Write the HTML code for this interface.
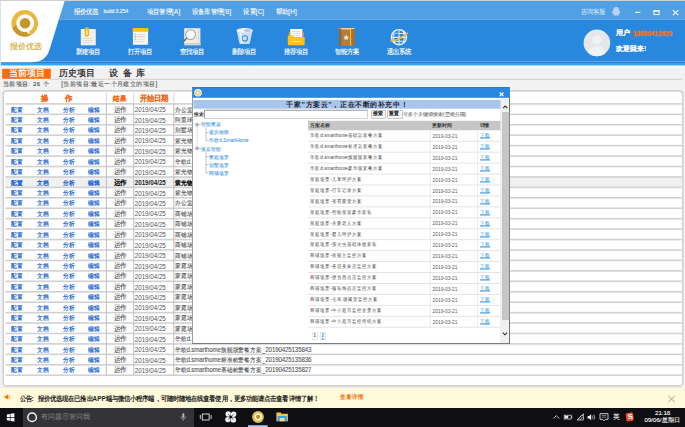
<!DOCTYPE html>
<html><head><meta charset="utf-8"><title>报价优选</title>
<style>
html,body{margin:0;padding:0;}
body{width:685px;height:427px;overflow:hidden;position:relative;background:#f2f2f2;font-family:"Liberation Sans",sans-serif;}
.t{position:absolute;white-space:nowrap;}
.r{position:absolute;}
svg{position:absolute;left:0;top:0;}
a{color:inherit;}
</style></head><body>

<svg width="685" height="68" viewBox="0 0 685 68">
<defs><linearGradient id="hg" x1="0" y1="0" x2="0" y2="1"><stop offset="0" stop-color="#2a9ff3"/><stop offset="0.75" stop-color="#3aacf7"/><stop offset="1" stop-color="#9fd4f8"/></linearGradient><linearGradient id="hg2" x1="0" y1="0" x2="0" y2="1"><stop offset="0" stop-color="#fcfcfc"/><stop offset="1" stop-color="#f2f2f2"/></linearGradient></defs>
<rect x="0" y="0" width="685" height="1" fill="#cfcfcf"/>
<rect x="0" y="1" width="685" height="18.5" fill="#51a0e3"/>
<rect x="0" y="19.5" width="685" height="42" fill="#2888de"/>
<rect x="0" y="61.6" width="685" height="2.2" fill="#2482db"/>
<rect x="0" y="65.6" width="685" height="2.4" fill="url(#hg2)"/>
<rect x="0" y="63.6" width="685" height="2.1" fill="url(#hg)"/>
<path d="M0,1 L64.6,1 L49.4,50 Q45.6,62.2 31.6,62.2 L0,62.2 Z" fill="#ffffff"/>
<rect x="0" y="1" width="1" height="66" fill="#d9e1ea"/>
</svg>
<svg width="60" height="62" viewBox="0 0 60 62">
<circle cx="24.7" cy="23.4" r="13.3" fill="#e9b93f"/>
<path d="M12.5,28 A13.3,13.3 0 0 0 30,35.6 L26,30 L17,24 Z" fill="#c8982c"/>
<circle cx="25.2" cy="23.2" r="8.9" fill="#ffffff"/>
<path d="M24.5,30.5 L29.4,34.2 L29.3,28.5 Z" fill="#ffffff"/>
<circle cx="25" cy="23.2" r="5.3" fill="#c4962c"/>
</svg>
<div class="t" style="left:9.80px;top:42.90px;font-size:7.8px;line-height:7.8px;height:7.8px;color:#d6ad45;-webkit-text-stroke:0.2px #d6ad45;width:32.02px;text-align-last:justify;">报价优选</div>
<div class="t" style="left:73.70px;top:7.60px;font-size:6.2px;line-height:6.2px;height:6.2px;color:#fff;-webkit-text-stroke:0.1px #fff;width:24.02px;text-align-last:justify;transform:scaleY(1.1);transform-origin:0 0;">报价优选</div>
<div class="t" style="left:103.40px;top:9.20px;font-size:5.1px;line-height:5.1px;height:5.1px;color:#fff;-webkit-text-stroke:0.1px #fff;transform:scaleY(1.1);transform-origin:0 0;">build:3.254</div>
<div class="t" style="left:146.60px;top:7.60px;font-size:6.2px;line-height:6.2px;height:6.2px;color:#fff;-webkit-text-stroke:0.1px #fff;width:34.04px;text-align-last:justify;transform:scaleY(1.1);transform-origin:0 0;letter-spacing:0.35px;">项目管理[A]</div>
<div class="t" style="left:191.60px;top:7.60px;font-size:6.2px;line-height:6.2px;height:6.2px;color:#fff;-webkit-text-stroke:0.1px #fff;width:39.99px;text-align-last:justify;transform:scaleY(1.1);transform-origin:0 0;letter-spacing:0.3px;">设备库管理[B]</div>
<div class="t" style="left:243.30px;top:7.60px;font-size:6.2px;line-height:6.2px;height:6.2px;color:#fff;-webkit-text-stroke:0.1px #fff;width:20.94px;text-align-last:justify;transform:scaleY(1.1);transform-origin:0 0;letter-spacing:0.2px;">设置[C]</div>
<div class="t" style="left:275.80px;top:7.60px;font-size:6.2px;line-height:6.2px;height:6.2px;color:#fff;-webkit-text-stroke:0.1px #fff;width:21.19px;text-align-last:justify;transform:scaleY(1.1);transform-origin:0 0;letter-spacing:0.25px;">帮助[H]</div>
<div class="t" style="left:580.80px;top:8.30px;font-size:6.3px;line-height:6.3px;height:6.3px;color:#d6e8fa;width:24.02px;text-align-last:justify;transform:scaleY(1.1);transform-origin:0 0;">咨询客服</div>
<svg width="685" height="20" viewBox="0 0 685 20">
<path d="M616.2,7 c2.2,0 3.1,1.8 3.1,3.6 c0.8,1 1.2,2.2 0.9,3 c-0.3,0.2 -0.7,-0.3 -0.9,-0.6 c0,0.8 -0.4,1.3 -0.9,1.7 c0.4,0.2 0.6,0.5 0.3,0.7 h-5 c-0.3,-0.2 -0.1,-0.5 0.3,-0.7 c-0.5,-0.4 -0.9,-0.9 -0.9,-1.7 c-0.2,0.3 -0.6,0.8 -0.9,0.6 c-0.3,-0.8 0.1,-2 0.9,-3 c0,-1.8 0.9,-3.6 3.1,-3.6 z" fill="#b9d4f0"/>
<rect x="635" y="11.8" width="5.4" height="1.1" fill="#fff"/>
<rect x="653.9" y="10.7" width="5.2" height="3.9" fill="none" stroke="#fff" stroke-width="0.9"/>
<rect x="653.45" y="10.2" width="6.1" height="1.5" fill="#fff"/>
<path d="M672.9,10.1 L678.3,15.1 M678.3,10.1 L672.9,15.1" stroke="#fff" stroke-width="1.2" fill="none"/>
</svg>
<svg width="685" height="64" viewBox="0 0 685 64">
<!-- new project -->
<rect x="80.8" y="29" width="15" height="16.3" fill="#f4f1ea"/>
<path d="M93,29 h2.8 v2.8 z" fill="#d8d2c4"/>
<rect x="83" y="38" width="10" height="0.7" fill="#d0d4dc"/>
<rect x="83" y="40.2" width="10" height="0.7" fill="#d0d4dc"/>
<rect x="83" y="42.4" width="8" height="0.7" fill="#d0d4dc"/>
<rect x="84.6" y="27.3" width="4.6" height="9.6" rx="2.3" fill="#f1b92c"/>
<rect x="86.1" y="30" width="1.6" height="5" rx="0.8" fill="#fbe7a8"/>
<!-- open project -->
<rect x="132.9" y="29" width="15.2" height="15.8" fill="#f5f5f2"/>
<rect x="132.7" y="28" width="15.6" height="3.7" rx="0.6" fill="#fcc10a"/>
<rect x="136.5" y="34" width="8.5" height="0.7" fill="#c9d6cf"/>
<rect x="136.5" y="36.4" width="8.5" height="0.7" fill="#e7b7b7"/>
<rect x="136.5" y="38.8" width="8.5" height="0.7" fill="#bfe0d5"/>
<rect x="134.6" y="41.2" width="9" height="0.7" fill="#c3d3e6"/>
<rect x="134.6" y="33.8" width="1.2" height="1.2" fill="#6fcfaa"/>
<rect x="134.6" y="36.2" width="1.2" height="1.2" fill="#e0656a"/>
<rect x="134.6" y="38.6" width="1.2" height="1.2" fill="#6fcfaa"/>
<path d="M148.1,42.3 v2.5 h-2.5 z" fill="#d4d0c4"/>
<!-- find project -->
<rect x="184.2" y="28.2" width="16.2" height="15.6" fill="#efece6"/>
<rect x="184.2" y="43.6" width="16.6" height="1.8" fill="#d9d3c6"/>
<rect x="198" y="29" width="0.8" height="14" fill="#d5d0c6"/>
<circle cx="190.6" cy="34.6" r="4.9" fill="#f9f9f9" stroke="#a9a9a6" stroke-width="1.1"/>
<path d="M186.8,38.3 L183.6,41.2" stroke="#55585c" stroke-width="1.3" fill="none"/>
<!-- delete project -->
<path d="M236.6,30.2 L252.6,30.2 L249.8,43.2 Q249.5,44 248.5,44 L240.7,44 Q239.7,44 239.4,43.2 Z" fill="#c9dff6"/>
<ellipse cx="244.6" cy="30.4" rx="8.1" ry="2.3" fill="#eef3fb"/>
<ellipse cx="247.5" cy="30.6" rx="3.6" ry="1.3" fill="#b7bfe0"/>
<circle cx="244.8" cy="38.4" r="2.7" fill="none" stroke="#3f8ee0" stroke-width="1.1"/>
<path d="M240.3,33 L241.8,43" stroke="#f4f8fd" stroke-width="1.4" fill="none"/>
<!-- recommend project (folder) -->
<rect x="290.2" y="29" width="12.2" height="9" fill="#fbfaf6"/>
<rect x="292" y="31" width="8.6" height="0.7" fill="#dcdad2"/>
<rect x="292" y="33" width="8.6" height="0.7" fill="#dcdad2"/>
<rect x="292" y="35" width="8.6" height="0.7" fill="#dcdad2"/>
<path d="M288.8,32.2 h1.4 v4 h-1.4 z M302.4,32.2 h1.4 v4 h-1.4z" fill="#e9a400"/>
<path d="M287.8,35.4 h5.4 l0.9,1.6 h10.6 v7.3 q0,1 -1,1 h-14.9 q-1,0 -1,-1 z" fill="#fdc21b"/>
<rect x="291.5" y="41" width="9.8" height="1.1" fill="#ffe188"/>
<!-- smart plan (book) -->
<rect x="339.3" y="28" width="15.4" height="17.7" rx="1.2" fill="#b67a3b"/>
<rect x="339.3" y="28" width="15.4" height="1.4" rx="0.7" fill="#e9d3b2"/>
<rect x="339.3" y="28.6" width="2" height="17" rx="0.8" fill="#99602a"/>
<rect x="350" y="28" width="1.3" height="17.7" fill="#fbc312"/>
<rect x="351.3" y="29" width="3.4" height="16.6" fill="#a96e33"/>
<path d="M346.2,34.6 l0.85,1.9 2.05,0.2 -1.55,1.35 0.45,2 -1.8,-1.05 -1.8,1.05 0.45,-2 -1.55,-1.35 2.05,-0.2 z" fill="#f7efe4"/>
<!-- exit system (globe) -->
<circle cx="399" cy="37.2" r="7.5" fill="#2a7fe0" stroke="#eef4fc" stroke-width="1.5"/>
<path d="M392,33.5 h14 M391.6,37.4 h14.8 M392,41.2 h14 M399,29.6 v15.2 M395,30.6 q-2.6,6.6 0,13.2 M403,30.6 q2.6,6.6 0,13.2" stroke="#e4eefb" stroke-width="1.1" fill="none"/>
<path d="M399,29.8 a7.4,7.4 0 0 0 -6,4 l6,1 z" fill="#5aa5f0" opacity="0.6"/>
<path d="M390.2,41.2 Q398,41 407.8,32.8" stroke="#f5bf1a" stroke-width="1.3" fill="none"/>
<circle cx="401" cy="37.6" r="1.2" fill="#f5bf1a"/>
</svg>
<div class="t" style="left:76.20px;top:48.30px;font-size:6.3px;line-height:6.3px;height:6.3px;color:#fff;-webkit-text-stroke:0.12px #fff;width:24.02px;text-align-last:justify;transform:scaleY(1.1);transform-origin:0 0;">新建项目</div>
<div class="t" style="left:128.20px;top:48.30px;font-size:6.3px;line-height:6.3px;height:6.3px;color:#fff;-webkit-text-stroke:0.12px #fff;width:24.02px;text-align-last:justify;transform:scaleY(1.1);transform-origin:0 0;">打开项目</div>
<div class="t" style="left:179.80px;top:48.30px;font-size:6.3px;line-height:6.3px;height:6.3px;color:#fff;-webkit-text-stroke:0.12px #fff;width:24.02px;text-align-last:justify;transform:scaleY(1.1);transform-origin:0 0;">查找项目</div>
<div class="t" style="left:231.60px;top:48.30px;font-size:6.3px;line-height:6.3px;height:6.3px;color:#fff;-webkit-text-stroke:0.12px #fff;width:24.02px;text-align-last:justify;transform:scaleY(1.1);transform-origin:0 0;">删除项目</div>
<div class="t" style="left:284.00px;top:48.30px;font-size:6.3px;line-height:6.3px;height:6.3px;color:#fff;-webkit-text-stroke:0.12px #fff;width:24.02px;text-align-last:justify;transform:scaleY(1.1);transform-origin:0 0;">推荐项目</div>
<div class="t" style="left:335.40px;top:48.30px;font-size:6.3px;line-height:6.3px;height:6.3px;color:#fff;-webkit-text-stroke:0.12px #fff;width:24.02px;text-align-last:justify;transform:scaleY(1.1);transform-origin:0 0;">智能方案</div>
<div class="t" style="left:387.20px;top:48.30px;font-size:6.3px;line-height:6.3px;height:6.3px;color:#fff;-webkit-text-stroke:0.12px #fff;width:24.02px;text-align-last:justify;transform:scaleY(1.1);transform-origin:0 0;">退出系统</div>
<svg width="685" height="64" viewBox="0 0 685 64">
<defs><clipPath id="av"><circle cx="596.9" cy="42.9" r="13.3"/></clipPath></defs>
<circle cx="596.9" cy="42.9" r="13.3" fill="#e6e7ea"/>
<g clip-path="url(#av)"><circle cx="596.9" cy="39.8" r="4.6" fill="#f1f2f4"/><ellipse cx="596.9" cy="54.5" rx="9.2" ry="8.2" fill="#f1f2f4"/></g>
</svg>
<div class="t" style="left:616.10px;top:30.40px;font-size:6.7px;line-height:6.7px;height:6.7px;color:#fff;font-weight:bold;-webkit-text-stroke:0.08px #fff;width:14.02px;text-align-last:justify;">用户</div>
<div class="t" style="left:633.00px;top:30.70px;font-size:6.4px;line-height:6.4px;height:6.4px;color:#f47216;font-weight:bold;-webkit-text-stroke:0.4px #f47216;transform:scaleY(1.05);transform-origin:0 0;">13580412620</div>
<div class="t" style="left:616.10px;top:45.90px;font-size:6.9px;line-height:6.9px;height:6.9px;color:#fff;font-weight:bold;-webkit-text-stroke:0.08px #fff;width:30.32px;text-align-last:justify;transform:scaleY(1.05);transform-origin:0 0;">欢迎回来!</div>
<svg width="685" height="100" viewBox="0 0 685 100"><rect x="2.2" y="68.8" width="48.6" height="10" fill="#ff6a0d"/><rect x="50.8" y="78.8" width="631.5" height="0.9" fill="#cccccc"/></svg>
<div class="t" style="left:8.50px;top:68.80px;font-size:8.8px;line-height:8.8px;height:8.8px;color:#fff4e8;font-weight:bold;width:36.02px;text-align-last:justify;">当前项目</div>
<div class="t" style="left:59.00px;top:69.00px;font-size:9.0px;line-height:9.0px;height:9.0px;color:#3a3a3a;font-weight:bold;width:36.02px;text-align-last:justify;">历史项目</div>
<div class="t" style="left:109.20px;top:69.00px;font-size:9.0px;line-height:9.0px;height:9.0px;color:#3a3a3a;font-weight:bold;width:36.04px;text-align-last:justify;word-spacing:2.0px;">设 备 库</div>
<div class="t" style="left:3.00px;top:81.30px;font-size:6.1px;line-height:6.1px;height:6.1px;color:#4a4a4a;-webkit-text-stroke:0.1px #4a4a4a;width:46.49px;text-align-last:justify;letter-spacing:0.3px;word-spacing:0.8px;">当前项目: 26 个</div>
<div class="t" style="left:61.30px;top:80.90px;font-size:6.3px;line-height:6.3px;height:6.3px;color:#555;-webkit-text-stroke:0.1px #555;width:96.41px;text-align-last:justify;letter-spacing:0.42px;">[当前项目:最近一个月建立的项目]</div>
<svg width="685" height="427" viewBox="0 0 685 427"><rect x="3.2" y="90.9" width="679.6" height="295.0" rx="3.4" fill="#fff" stroke="#d3d3d3" stroke-width="1.7"/><rect x="5.4" y="176.95" width="676.2" height="10.44" fill="#f0f0f0"/><rect x="5.4" y="103.10" width="676.3" height="1.6" fill="#d1d1d1"/><rect x="5.4" y="113.54" width="676.3" height="1.6" fill="#d1d1d1"/><rect x="5.4" y="123.97" width="676.3" height="1.6" fill="#d1d1d1"/><rect x="5.4" y="134.41" width="676.3" height="1.6" fill="#d1d1d1"/><rect x="5.4" y="144.84" width="676.3" height="1.6" fill="#d1d1d1"/><rect x="5.4" y="155.28" width="676.3" height="1.6" fill="#d1d1d1"/><rect x="5.4" y="165.72" width="676.3" height="1.6" fill="#d1d1d1"/><rect x="5.4" y="176.15" width="676.3" height="1.6" fill="#d1d1d1"/><rect x="5.4" y="186.59" width="676.3" height="1.6" fill="#d1d1d1"/><rect x="5.4" y="197.02" width="676.3" height="1.6" fill="#d1d1d1"/><rect x="5.4" y="207.46" width="676.3" height="1.6" fill="#d1d1d1"/><rect x="5.4" y="217.90" width="676.3" height="1.6" fill="#d1d1d1"/><rect x="5.4" y="228.33" width="676.3" height="1.6" fill="#d1d1d1"/><rect x="5.4" y="238.77" width="676.3" height="1.6" fill="#d1d1d1"/><rect x="5.4" y="249.20" width="676.3" height="1.6" fill="#d1d1d1"/><rect x="5.4" y="259.64" width="676.3" height="1.6" fill="#d1d1d1"/><rect x="5.4" y="270.08" width="676.3" height="1.6" fill="#d1d1d1"/><rect x="5.4" y="280.51" width="676.3" height="1.6" fill="#d1d1d1"/><rect x="5.4" y="290.95" width="676.3" height="1.6" fill="#d1d1d1"/><rect x="5.4" y="301.38" width="676.3" height="1.6" fill="#d1d1d1"/><rect x="5.4" y="311.82" width="676.3" height="1.6" fill="#d1d1d1"/><rect x="5.4" y="322.26" width="676.3" height="1.6" fill="#d1d1d1"/><rect x="5.4" y="332.69" width="676.3" height="1.6" fill="#d1d1d1"/><rect x="5.4" y="343.13" width="676.3" height="1.6" fill="#d1d1d1"/><rect x="5.4" y="353.56" width="676.3" height="1.6" fill="#d1d1d1"/><rect x="5.4" y="364.00" width="676.3" height="1.6" fill="#d1d1d1"/><rect x="5.4" y="374.44" width="676.3" height="1.6" fill="#d1d1d1"/><rect x="105.85" y="93" width="1.1" height="10.90" fill="#dcdcdc"/><rect x="105.85" y="103.90" width="1.1" height="271.34" fill="#c2c2c2"/><rect x="133.15" y="93" width="1.1" height="10.90" fill="#dcdcdc"/><rect x="133.15" y="103.90" width="1.1" height="271.34" fill="#c2c2c2"/><rect x="173.25" y="93" width="1.1" height="10.90" fill="#dcdcdc"/><rect x="173.25" y="103.90" width="1.1" height="271.34" fill="#c2c2c2"/></svg>
<div class="t" style="left:41.30px;top:95.00px;font-size:6.9px;line-height:6.9px;height:6.9px;color:#f0681a;font-weight:bold;-webkit-text-stroke:0.08px #f0681a;transform:scaleY(1.1);transform-origin:0 0;">操</div>
<div class="t" style="left:65.00px;top:95.00px;font-size:6.9px;line-height:6.9px;height:6.9px;color:#f0681a;font-weight:bold;-webkit-text-stroke:0.08px #f0681a;transform:scaleY(1.1);transform-origin:0 0;">作</div>
<div class="t" style="left:113.20px;top:95.00px;font-size:6.7px;line-height:6.7px;height:6.7px;color:#f0681a;font-weight:bold;-webkit-text-stroke:0.08px #f0681a;width:14.02px;text-align-last:justify;transform:scaleY(1.1);transform-origin:0 0;">结果</div>
<div class="t" style="left:139.50px;top:95.00px;font-size:6.95px;line-height:6.95px;height:6.95px;color:#f0681a;font-weight:bold;-webkit-text-stroke:0.08px #f0681a;width:28.02px;text-align-last:justify;transform:scaleY(1.1);transform-origin:0 0;">开始日期</div>
<div class="t" style="left:11.40px;top:106.50px;font-size:6.0px;line-height:6.0px;height:6.0px;color:#2568d4;-webkit-text-stroke:0.18px #2568d4;width:12.02px;text-align-last:justify;transform:scaleY(1.06);transform-origin:0 0;">配置</div>
<div class="t" style="left:36.80px;top:106.50px;font-size:6.0px;line-height:6.0px;height:6.0px;color:#2568d4;-webkit-text-stroke:0.18px #2568d4;width:12.02px;text-align-last:justify;transform:scaleY(1.06);transform-origin:0 0;">文档</div>
<div class="t" style="left:62.50px;top:106.50px;font-size:6.0px;line-height:6.0px;height:6.0px;color:#2568d4;-webkit-text-stroke:0.18px #2568d4;width:12.02px;text-align-last:justify;transform:scaleY(1.06);transform-origin:0 0;">分析</div>
<div class="t" style="left:87.60px;top:106.50px;font-size:6.0px;line-height:6.0px;height:6.0px;color:#2568d4;-webkit-text-stroke:0.18px #2568d4;width:12.02px;text-align-last:justify;transform:scaleY(1.06);transform-origin:0 0;">编辑</div>
<div class="t" style="left:113.80px;top:106.50px;font-size:6.15px;line-height:6.15px;height:6.15px;color:#555;-webkit-text-stroke:0.1px #555;width:12.02px;text-align-last:justify;transform:scaleY(1.06);transform-origin:0 0;">运作</div>
<div class="t" style="left:134.80px;top:106.10px;font-size:6.2px;line-height:6.2px;height:6.2px;color:#555;transform:scaleY(1.15);transform-origin:0 0;">2019/04/25</div>
<div class="t" style="left:174.70px;top:106.50px;font-size:6.1px;line-height:6.1px;height:6.1px;color:#555;-webkit-text-stroke:0.1px #555;width:18.02px;text-align-last:justify;transform:scaleY(1.06);transform-origin:0 0;">办公室</div>
<div class="t" style="left:11.40px;top:116.94px;font-size:6.0px;line-height:6.0px;height:6.0px;color:#2568d4;-webkit-text-stroke:0.18px #2568d4;width:12.02px;text-align-last:justify;transform:scaleY(1.06);transform-origin:0 0;">配置</div>
<div class="t" style="left:36.80px;top:116.94px;font-size:6.0px;line-height:6.0px;height:6.0px;color:#2568d4;-webkit-text-stroke:0.18px #2568d4;width:12.02px;text-align-last:justify;transform:scaleY(1.06);transform-origin:0 0;">文档</div>
<div class="t" style="left:62.50px;top:116.94px;font-size:6.0px;line-height:6.0px;height:6.0px;color:#2568d4;-webkit-text-stroke:0.18px #2568d4;width:12.02px;text-align-last:justify;transform:scaleY(1.06);transform-origin:0 0;">分析</div>
<div class="t" style="left:87.60px;top:116.94px;font-size:6.0px;line-height:6.0px;height:6.0px;color:#2568d4;-webkit-text-stroke:0.18px #2568d4;width:12.02px;text-align-last:justify;transform:scaleY(1.06);transform-origin:0 0;">编辑</div>
<div class="t" style="left:113.80px;top:116.94px;font-size:6.15px;line-height:6.15px;height:6.15px;color:#555;-webkit-text-stroke:0.1px #555;width:12.02px;text-align-last:justify;transform:scaleY(1.06);transform-origin:0 0;">运作</div>
<div class="t" style="left:134.80px;top:116.54px;font-size:6.2px;line-height:6.2px;height:6.2px;color:#555;transform:scaleY(1.15);transform-origin:0 0;">2019/04/25</div>
<div class="t" style="left:174.70px;top:116.94px;font-size:6.1px;line-height:6.1px;height:6.1px;color:#555;-webkit-text-stroke:0.1px #555;width:18.02px;text-align-last:justify;transform:scaleY(1.06);transform-origin:0 0;">阿里球</div>
<div class="t" style="left:11.40px;top:127.37px;font-size:6.0px;line-height:6.0px;height:6.0px;color:#2568d4;-webkit-text-stroke:0.18px #2568d4;width:12.02px;text-align-last:justify;transform:scaleY(1.06);transform-origin:0 0;">配置</div>
<div class="t" style="left:36.80px;top:127.37px;font-size:6.0px;line-height:6.0px;height:6.0px;color:#2568d4;-webkit-text-stroke:0.18px #2568d4;width:12.02px;text-align-last:justify;transform:scaleY(1.06);transform-origin:0 0;">文档</div>
<div class="t" style="left:62.50px;top:127.37px;font-size:6.0px;line-height:6.0px;height:6.0px;color:#2568d4;-webkit-text-stroke:0.18px #2568d4;width:12.02px;text-align-last:justify;transform:scaleY(1.06);transform-origin:0 0;">分析</div>
<div class="t" style="left:87.60px;top:127.37px;font-size:6.0px;line-height:6.0px;height:6.0px;color:#2568d4;-webkit-text-stroke:0.18px #2568d4;width:12.02px;text-align-last:justify;transform:scaleY(1.06);transform-origin:0 0;">编辑</div>
<div class="t" style="left:113.80px;top:127.37px;font-size:6.15px;line-height:6.15px;height:6.15px;color:#555;-webkit-text-stroke:0.1px #555;width:12.02px;text-align-last:justify;transform:scaleY(1.06);transform-origin:0 0;">运作</div>
<div class="t" style="left:134.80px;top:126.97px;font-size:6.2px;line-height:6.2px;height:6.2px;color:#555;transform:scaleY(1.15);transform-origin:0 0;">2019/04/25</div>
<div class="t" style="left:174.70px;top:127.37px;font-size:6.1px;line-height:6.1px;height:6.1px;color:#555;-webkit-text-stroke:0.1px #555;width:18.02px;text-align-last:justify;transform:scaleY(1.06);transform-origin:0 0;">别墅场</div>
<div class="t" style="left:11.40px;top:137.81px;font-size:6.0px;line-height:6.0px;height:6.0px;color:#2568d4;-webkit-text-stroke:0.18px #2568d4;width:12.02px;text-align-last:justify;transform:scaleY(1.06);transform-origin:0 0;">配置</div>
<div class="t" style="left:36.80px;top:137.81px;font-size:6.0px;line-height:6.0px;height:6.0px;color:#2568d4;-webkit-text-stroke:0.18px #2568d4;width:12.02px;text-align-last:justify;transform:scaleY(1.06);transform-origin:0 0;">文档</div>
<div class="t" style="left:62.50px;top:137.81px;font-size:6.0px;line-height:6.0px;height:6.0px;color:#2568d4;-webkit-text-stroke:0.18px #2568d4;width:12.02px;text-align-last:justify;transform:scaleY(1.06);transform-origin:0 0;">分析</div>
<div class="t" style="left:87.60px;top:137.81px;font-size:6.0px;line-height:6.0px;height:6.0px;color:#2568d4;-webkit-text-stroke:0.18px #2568d4;width:12.02px;text-align-last:justify;transform:scaleY(1.06);transform-origin:0 0;">编辑</div>
<div class="t" style="left:113.80px;top:137.81px;font-size:6.15px;line-height:6.15px;height:6.15px;color:#555;-webkit-text-stroke:0.1px #555;width:12.02px;text-align-last:justify;transform:scaleY(1.06);transform-origin:0 0;">运作</div>
<div class="t" style="left:134.80px;top:137.41px;font-size:6.2px;line-height:6.2px;height:6.2px;color:#555;transform:scaleY(1.15);transform-origin:0 0;">2019/04/25</div>
<div class="t" style="left:174.70px;top:137.81px;font-size:6.1px;line-height:6.1px;height:6.1px;color:#555;-webkit-text-stroke:0.1px #555;width:18.02px;text-align-last:justify;transform:scaleY(1.06);transform-origin:0 0;">紫光物</div>
<div class="t" style="left:11.40px;top:148.24px;font-size:6.0px;line-height:6.0px;height:6.0px;color:#2568d4;-webkit-text-stroke:0.18px #2568d4;width:12.02px;text-align-last:justify;transform:scaleY(1.06);transform-origin:0 0;">配置</div>
<div class="t" style="left:36.80px;top:148.24px;font-size:6.0px;line-height:6.0px;height:6.0px;color:#2568d4;-webkit-text-stroke:0.18px #2568d4;width:12.02px;text-align-last:justify;transform:scaleY(1.06);transform-origin:0 0;">文档</div>
<div class="t" style="left:62.50px;top:148.24px;font-size:6.0px;line-height:6.0px;height:6.0px;color:#2568d4;-webkit-text-stroke:0.18px #2568d4;width:12.02px;text-align-last:justify;transform:scaleY(1.06);transform-origin:0 0;">分析</div>
<div class="t" style="left:87.60px;top:148.24px;font-size:6.0px;line-height:6.0px;height:6.0px;color:#2568d4;-webkit-text-stroke:0.18px #2568d4;width:12.02px;text-align-last:justify;transform:scaleY(1.06);transform-origin:0 0;">编辑</div>
<div class="t" style="left:113.80px;top:148.24px;font-size:6.15px;line-height:6.15px;height:6.15px;color:#555;-webkit-text-stroke:0.1px #555;width:12.02px;text-align-last:justify;transform:scaleY(1.06);transform-origin:0 0;">运作</div>
<div class="t" style="left:134.80px;top:147.84px;font-size:6.2px;line-height:6.2px;height:6.2px;color:#555;transform:scaleY(1.15);transform-origin:0 0;">2019/04/25</div>
<div class="t" style="left:174.70px;top:148.24px;font-size:6.1px;line-height:6.1px;height:6.1px;color:#555;-webkit-text-stroke:0.1px #555;width:18.02px;text-align-last:justify;transform:scaleY(1.06);transform-origin:0 0;">紫光物</div>
<div class="t" style="left:11.40px;top:158.68px;font-size:6.0px;line-height:6.0px;height:6.0px;color:#2568d4;-webkit-text-stroke:0.18px #2568d4;width:12.02px;text-align-last:justify;transform:scaleY(1.06);transform-origin:0 0;">配置</div>
<div class="t" style="left:36.80px;top:158.68px;font-size:6.0px;line-height:6.0px;height:6.0px;color:#2568d4;-webkit-text-stroke:0.18px #2568d4;width:12.02px;text-align-last:justify;transform:scaleY(1.06);transform-origin:0 0;">文档</div>
<div class="t" style="left:62.50px;top:158.68px;font-size:6.0px;line-height:6.0px;height:6.0px;color:#2568d4;-webkit-text-stroke:0.18px #2568d4;width:12.02px;text-align-last:justify;transform:scaleY(1.06);transform-origin:0 0;">分析</div>
<div class="t" style="left:87.60px;top:158.68px;font-size:6.0px;line-height:6.0px;height:6.0px;color:#2568d4;-webkit-text-stroke:0.18px #2568d4;width:12.02px;text-align-last:justify;transform:scaleY(1.06);transform-origin:0 0;">编辑</div>
<div class="t" style="left:113.80px;top:158.68px;font-size:6.15px;line-height:6.15px;height:6.15px;color:#555;-webkit-text-stroke:0.1px #555;width:12.02px;text-align-last:justify;transform:scaleY(1.06);transform-origin:0 0;">运作</div>
<div class="t" style="left:134.80px;top:158.28px;font-size:6.2px;line-height:6.2px;height:6.2px;color:#555;transform:scaleY(1.15);transform-origin:0 0;">2019/04/25</div>
<div class="t" style="left:174.70px;top:158.68px;font-size:6.1px;line-height:6.1px;height:6.1px;color:#555;-webkit-text-stroke:0.1px #555;width:17.11px;text-align-last:justify;transform:scaleY(1.06);transform-origin:0 0;">华歌d.</div>
<div class="t" style="left:11.40px;top:169.12px;font-size:6.0px;line-height:6.0px;height:6.0px;color:#2568d4;-webkit-text-stroke:0.18px #2568d4;width:12.02px;text-align-last:justify;transform:scaleY(1.06);transform-origin:0 0;">配置</div>
<div class="t" style="left:36.80px;top:169.12px;font-size:6.0px;line-height:6.0px;height:6.0px;color:#2568d4;-webkit-text-stroke:0.18px #2568d4;width:12.02px;text-align-last:justify;transform:scaleY(1.06);transform-origin:0 0;">文档</div>
<div class="t" style="left:62.50px;top:169.12px;font-size:6.0px;line-height:6.0px;height:6.0px;color:#2568d4;-webkit-text-stroke:0.18px #2568d4;width:12.02px;text-align-last:justify;transform:scaleY(1.06);transform-origin:0 0;">分析</div>
<div class="t" style="left:87.60px;top:169.12px;font-size:6.0px;line-height:6.0px;height:6.0px;color:#2568d4;-webkit-text-stroke:0.18px #2568d4;width:12.02px;text-align-last:justify;transform:scaleY(1.06);transform-origin:0 0;">编辑</div>
<div class="t" style="left:113.80px;top:169.12px;font-size:6.15px;line-height:6.15px;height:6.15px;color:#555;-webkit-text-stroke:0.1px #555;width:12.02px;text-align-last:justify;transform:scaleY(1.06);transform-origin:0 0;">运作</div>
<div class="t" style="left:134.80px;top:168.72px;font-size:6.2px;line-height:6.2px;height:6.2px;color:#555;transform:scaleY(1.15);transform-origin:0 0;">2019/04/25</div>
<div class="t" style="left:174.70px;top:169.12px;font-size:6.1px;line-height:6.1px;height:6.1px;color:#555;-webkit-text-stroke:0.1px #555;width:18.02px;text-align-last:justify;transform:scaleY(1.06);transform-origin:0 0;">紫光物</div>
<div class="t" style="left:11.40px;top:179.55px;font-size:6.0px;line-height:6.0px;height:6.0px;color:#2568d4;-webkit-text-stroke:0.3px #2568d4;width:12.02px;text-align-last:justify;transform:scaleY(1.06);transform-origin:0 0;">配置</div>
<div class="t" style="left:36.80px;top:179.55px;font-size:6.0px;line-height:6.0px;height:6.0px;color:#2568d4;-webkit-text-stroke:0.3px #2568d4;width:12.02px;text-align-last:justify;transform:scaleY(1.06);transform-origin:0 0;">文档</div>
<div class="t" style="left:62.50px;top:179.55px;font-size:6.0px;line-height:6.0px;height:6.0px;color:#2568d4;-webkit-text-stroke:0.3px #2568d4;width:12.02px;text-align-last:justify;transform:scaleY(1.06);transform-origin:0 0;">分析</div>
<div class="t" style="left:87.60px;top:179.55px;font-size:6.0px;line-height:6.0px;height:6.0px;color:#2568d4;-webkit-text-stroke:0.3px #2568d4;width:12.02px;text-align-last:justify;transform:scaleY(1.06);transform-origin:0 0;">编辑</div>
<div class="t" style="left:113.80px;top:179.55px;font-size:6.15px;line-height:6.15px;height:6.15px;color:#1c1c1c;-webkit-text-stroke:0.38px #1c1c1c;width:12.02px;text-align-last:justify;transform:scaleY(1.06);transform-origin:0 0;">运作</div>
<div class="t" style="left:134.80px;top:179.15px;font-size:6.2px;line-height:6.2px;height:6.2px;color:#1c1c1c;font-weight:bold;transform:scaleY(1.15);transform-origin:0 0;">2019/04/25</div>
<div class="t" style="left:174.70px;top:179.55px;font-size:6.1px;line-height:6.1px;height:6.1px;color:#1c1c1c;-webkit-text-stroke:0.38px #1c1c1c;width:18.02px;text-align-last:justify;transform:scaleY(1.06);transform-origin:0 0;">紫光物</div>
<div class="t" style="left:11.40px;top:189.99px;font-size:6.0px;line-height:6.0px;height:6.0px;color:#2568d4;-webkit-text-stroke:0.18px #2568d4;width:12.02px;text-align-last:justify;transform:scaleY(1.06);transform-origin:0 0;">配置</div>
<div class="t" style="left:36.80px;top:189.99px;font-size:6.0px;line-height:6.0px;height:6.0px;color:#2568d4;-webkit-text-stroke:0.18px #2568d4;width:12.02px;text-align-last:justify;transform:scaleY(1.06);transform-origin:0 0;">文档</div>
<div class="t" style="left:62.50px;top:189.99px;font-size:6.0px;line-height:6.0px;height:6.0px;color:#2568d4;-webkit-text-stroke:0.18px #2568d4;width:12.02px;text-align-last:justify;transform:scaleY(1.06);transform-origin:0 0;">分析</div>
<div class="t" style="left:87.60px;top:189.99px;font-size:6.0px;line-height:6.0px;height:6.0px;color:#2568d4;-webkit-text-stroke:0.18px #2568d4;width:12.02px;text-align-last:justify;transform:scaleY(1.06);transform-origin:0 0;">编辑</div>
<div class="t" style="left:113.80px;top:189.99px;font-size:6.15px;line-height:6.15px;height:6.15px;color:#555;-webkit-text-stroke:0.1px #555;width:12.02px;text-align-last:justify;transform:scaleY(1.06);transform-origin:0 0;">运作</div>
<div class="t" style="left:134.80px;top:189.59px;font-size:6.2px;line-height:6.2px;height:6.2px;color:#555;transform:scaleY(1.15);transform-origin:0 0;">2019/04/25</div>
<div class="t" style="left:174.70px;top:189.99px;font-size:6.1px;line-height:6.1px;height:6.1px;color:#555;-webkit-text-stroke:0.1px #555;width:18.02px;text-align-last:justify;transform:scaleY(1.06);transform-origin:0 0;">紫光物</div>
<div class="t" style="left:11.40px;top:200.42px;font-size:6.0px;line-height:6.0px;height:6.0px;color:#2568d4;-webkit-text-stroke:0.18px #2568d4;width:12.02px;text-align-last:justify;transform:scaleY(1.06);transform-origin:0 0;">配置</div>
<div class="t" style="left:36.80px;top:200.42px;font-size:6.0px;line-height:6.0px;height:6.0px;color:#2568d4;-webkit-text-stroke:0.18px #2568d4;width:12.02px;text-align-last:justify;transform:scaleY(1.06);transform-origin:0 0;">文档</div>
<div class="t" style="left:62.50px;top:200.42px;font-size:6.0px;line-height:6.0px;height:6.0px;color:#2568d4;-webkit-text-stroke:0.18px #2568d4;width:12.02px;text-align-last:justify;transform:scaleY(1.06);transform-origin:0 0;">分析</div>
<div class="t" style="left:87.60px;top:200.42px;font-size:6.0px;line-height:6.0px;height:6.0px;color:#2568d4;-webkit-text-stroke:0.18px #2568d4;width:12.02px;text-align-last:justify;transform:scaleY(1.06);transform-origin:0 0;">编辑</div>
<div class="t" style="left:113.80px;top:200.42px;font-size:6.15px;line-height:6.15px;height:6.15px;color:#555;-webkit-text-stroke:0.1px #555;width:12.02px;text-align-last:justify;transform:scaleY(1.06);transform-origin:0 0;">运作</div>
<div class="t" style="left:134.80px;top:200.02px;font-size:6.2px;line-height:6.2px;height:6.2px;color:#555;transform:scaleY(1.15);transform-origin:0 0;">2019/04/25</div>
<div class="t" style="left:174.70px;top:200.42px;font-size:6.1px;line-height:6.1px;height:6.1px;color:#555;-webkit-text-stroke:0.1px #555;width:18.02px;text-align-last:justify;transform:scaleY(1.06);transform-origin:0 0;">办公室</div>
<div class="t" style="left:11.40px;top:210.86px;font-size:6.0px;line-height:6.0px;height:6.0px;color:#2568d4;-webkit-text-stroke:0.18px #2568d4;width:12.02px;text-align-last:justify;transform:scaleY(1.06);transform-origin:0 0;">配置</div>
<div class="t" style="left:36.80px;top:210.86px;font-size:6.0px;line-height:6.0px;height:6.0px;color:#2568d4;-webkit-text-stroke:0.18px #2568d4;width:12.02px;text-align-last:justify;transform:scaleY(1.06);transform-origin:0 0;">文档</div>
<div class="t" style="left:62.50px;top:210.86px;font-size:6.0px;line-height:6.0px;height:6.0px;color:#2568d4;-webkit-text-stroke:0.18px #2568d4;width:12.02px;text-align-last:justify;transform:scaleY(1.06);transform-origin:0 0;">分析</div>
<div class="t" style="left:87.60px;top:210.86px;font-size:6.0px;line-height:6.0px;height:6.0px;color:#2568d4;-webkit-text-stroke:0.18px #2568d4;width:12.02px;text-align-last:justify;transform:scaleY(1.06);transform-origin:0 0;">编辑</div>
<div class="t" style="left:113.80px;top:210.86px;font-size:6.15px;line-height:6.15px;height:6.15px;color:#555;-webkit-text-stroke:0.1px #555;width:12.02px;text-align-last:justify;transform:scaleY(1.06);transform-origin:0 0;">运作</div>
<div class="t" style="left:134.80px;top:210.46px;font-size:6.2px;line-height:6.2px;height:6.2px;color:#555;transform:scaleY(1.15);transform-origin:0 0;">2019/04/25</div>
<div class="t" style="left:174.70px;top:210.86px;font-size:6.1px;line-height:6.1px;height:6.1px;color:#555;-webkit-text-stroke:0.1px #555;width:18.02px;text-align-last:justify;transform:scaleY(1.06);transform-origin:0 0;">商铺场</div>
<div class="t" style="left:11.40px;top:221.30px;font-size:6.0px;line-height:6.0px;height:6.0px;color:#2568d4;-webkit-text-stroke:0.18px #2568d4;width:12.02px;text-align-last:justify;transform:scaleY(1.06);transform-origin:0 0;">配置</div>
<div class="t" style="left:36.80px;top:221.30px;font-size:6.0px;line-height:6.0px;height:6.0px;color:#2568d4;-webkit-text-stroke:0.18px #2568d4;width:12.02px;text-align-last:justify;transform:scaleY(1.06);transform-origin:0 0;">文档</div>
<div class="t" style="left:62.50px;top:221.30px;font-size:6.0px;line-height:6.0px;height:6.0px;color:#2568d4;-webkit-text-stroke:0.18px #2568d4;width:12.02px;text-align-last:justify;transform:scaleY(1.06);transform-origin:0 0;">分析</div>
<div class="t" style="left:87.60px;top:221.30px;font-size:6.0px;line-height:6.0px;height:6.0px;color:#2568d4;-webkit-text-stroke:0.18px #2568d4;width:12.02px;text-align-last:justify;transform:scaleY(1.06);transform-origin:0 0;">编辑</div>
<div class="t" style="left:113.80px;top:221.30px;font-size:6.15px;line-height:6.15px;height:6.15px;color:#555;-webkit-text-stroke:0.1px #555;width:12.02px;text-align-last:justify;transform:scaleY(1.06);transform-origin:0 0;">运作</div>
<div class="t" style="left:134.80px;top:220.90px;font-size:6.2px;line-height:6.2px;height:6.2px;color:#555;transform:scaleY(1.15);transform-origin:0 0;">2019/04/25</div>
<div class="t" style="left:174.70px;top:221.30px;font-size:6.1px;line-height:6.1px;height:6.1px;color:#555;-webkit-text-stroke:0.1px #555;width:18.02px;text-align-last:justify;transform:scaleY(1.06);transform-origin:0 0;">商铺场</div>
<div class="t" style="left:11.40px;top:231.73px;font-size:6.0px;line-height:6.0px;height:6.0px;color:#2568d4;-webkit-text-stroke:0.18px #2568d4;width:12.02px;text-align-last:justify;transform:scaleY(1.06);transform-origin:0 0;">配置</div>
<div class="t" style="left:36.80px;top:231.73px;font-size:6.0px;line-height:6.0px;height:6.0px;color:#2568d4;-webkit-text-stroke:0.18px #2568d4;width:12.02px;text-align-last:justify;transform:scaleY(1.06);transform-origin:0 0;">文档</div>
<div class="t" style="left:62.50px;top:231.73px;font-size:6.0px;line-height:6.0px;height:6.0px;color:#2568d4;-webkit-text-stroke:0.18px #2568d4;width:12.02px;text-align-last:justify;transform:scaleY(1.06);transform-origin:0 0;">分析</div>
<div class="t" style="left:87.60px;top:231.73px;font-size:6.0px;line-height:6.0px;height:6.0px;color:#2568d4;-webkit-text-stroke:0.18px #2568d4;width:12.02px;text-align-last:justify;transform:scaleY(1.06);transform-origin:0 0;">编辑</div>
<div class="t" style="left:113.80px;top:231.73px;font-size:6.15px;line-height:6.15px;height:6.15px;color:#555;-webkit-text-stroke:0.1px #555;width:12.02px;text-align-last:justify;transform:scaleY(1.06);transform-origin:0 0;">运作</div>
<div class="t" style="left:134.80px;top:231.33px;font-size:6.2px;line-height:6.2px;height:6.2px;color:#555;transform:scaleY(1.15);transform-origin:0 0;">2019/04/25</div>
<div class="t" style="left:174.70px;top:231.73px;font-size:6.1px;line-height:6.1px;height:6.1px;color:#555;-webkit-text-stroke:0.1px #555;width:18.02px;text-align-last:justify;transform:scaleY(1.06);transform-origin:0 0;">商铺场</div>
<div class="t" style="left:11.40px;top:242.17px;font-size:6.0px;line-height:6.0px;height:6.0px;color:#2568d4;-webkit-text-stroke:0.18px #2568d4;width:12.02px;text-align-last:justify;transform:scaleY(1.06);transform-origin:0 0;">配置</div>
<div class="t" style="left:36.80px;top:242.17px;font-size:6.0px;line-height:6.0px;height:6.0px;color:#2568d4;-webkit-text-stroke:0.18px #2568d4;width:12.02px;text-align-last:justify;transform:scaleY(1.06);transform-origin:0 0;">文档</div>
<div class="t" style="left:62.50px;top:242.17px;font-size:6.0px;line-height:6.0px;height:6.0px;color:#2568d4;-webkit-text-stroke:0.18px #2568d4;width:12.02px;text-align-last:justify;transform:scaleY(1.06);transform-origin:0 0;">分析</div>
<div class="t" style="left:87.60px;top:242.17px;font-size:6.0px;line-height:6.0px;height:6.0px;color:#2568d4;-webkit-text-stroke:0.18px #2568d4;width:12.02px;text-align-last:justify;transform:scaleY(1.06);transform-origin:0 0;">编辑</div>
<div class="t" style="left:113.80px;top:242.17px;font-size:6.15px;line-height:6.15px;height:6.15px;color:#555;-webkit-text-stroke:0.1px #555;width:12.02px;text-align-last:justify;transform:scaleY(1.06);transform-origin:0 0;">运作</div>
<div class="t" style="left:134.80px;top:241.77px;font-size:6.2px;line-height:6.2px;height:6.2px;color:#555;transform:scaleY(1.15);transform-origin:0 0;">2019/04/25</div>
<div class="t" style="left:174.70px;top:242.17px;font-size:6.1px;line-height:6.1px;height:6.1px;color:#555;-webkit-text-stroke:0.1px #555;width:18.02px;text-align-last:justify;transform:scaleY(1.06);transform-origin:0 0;">商铺场</div>
<div class="t" style="left:11.40px;top:252.60px;font-size:6.0px;line-height:6.0px;height:6.0px;color:#2568d4;-webkit-text-stroke:0.18px #2568d4;width:12.02px;text-align-last:justify;transform:scaleY(1.06);transform-origin:0 0;">配置</div>
<div class="t" style="left:36.80px;top:252.60px;font-size:6.0px;line-height:6.0px;height:6.0px;color:#2568d4;-webkit-text-stroke:0.18px #2568d4;width:12.02px;text-align-last:justify;transform:scaleY(1.06);transform-origin:0 0;">文档</div>
<div class="t" style="left:62.50px;top:252.60px;font-size:6.0px;line-height:6.0px;height:6.0px;color:#2568d4;-webkit-text-stroke:0.18px #2568d4;width:12.02px;text-align-last:justify;transform:scaleY(1.06);transform-origin:0 0;">分析</div>
<div class="t" style="left:87.60px;top:252.60px;font-size:6.0px;line-height:6.0px;height:6.0px;color:#2568d4;-webkit-text-stroke:0.18px #2568d4;width:12.02px;text-align-last:justify;transform:scaleY(1.06);transform-origin:0 0;">编辑</div>
<div class="t" style="left:113.80px;top:252.60px;font-size:6.15px;line-height:6.15px;height:6.15px;color:#555;-webkit-text-stroke:0.1px #555;width:12.02px;text-align-last:justify;transform:scaleY(1.06);transform-origin:0 0;">运作</div>
<div class="t" style="left:134.80px;top:252.20px;font-size:6.2px;line-height:6.2px;height:6.2px;color:#555;transform:scaleY(1.15);transform-origin:0 0;">2019/04/25</div>
<div class="t" style="left:174.70px;top:252.60px;font-size:6.1px;line-height:6.1px;height:6.1px;color:#555;-webkit-text-stroke:0.1px #555;width:18.02px;text-align-last:justify;transform:scaleY(1.06);transform-origin:0 0;">商铺场</div>
<div class="t" style="left:11.40px;top:263.04px;font-size:6.0px;line-height:6.0px;height:6.0px;color:#2568d4;-webkit-text-stroke:0.18px #2568d4;width:12.02px;text-align-last:justify;transform:scaleY(1.06);transform-origin:0 0;">配置</div>
<div class="t" style="left:36.80px;top:263.04px;font-size:6.0px;line-height:6.0px;height:6.0px;color:#2568d4;-webkit-text-stroke:0.18px #2568d4;width:12.02px;text-align-last:justify;transform:scaleY(1.06);transform-origin:0 0;">文档</div>
<div class="t" style="left:62.50px;top:263.04px;font-size:6.0px;line-height:6.0px;height:6.0px;color:#2568d4;-webkit-text-stroke:0.18px #2568d4;width:12.02px;text-align-last:justify;transform:scaleY(1.06);transform-origin:0 0;">分析</div>
<div class="t" style="left:87.60px;top:263.04px;font-size:6.0px;line-height:6.0px;height:6.0px;color:#2568d4;-webkit-text-stroke:0.18px #2568d4;width:12.02px;text-align-last:justify;transform:scaleY(1.06);transform-origin:0 0;">编辑</div>
<div class="t" style="left:113.80px;top:263.04px;font-size:6.15px;line-height:6.15px;height:6.15px;color:#555;-webkit-text-stroke:0.1px #555;width:12.02px;text-align-last:justify;transform:scaleY(1.06);transform-origin:0 0;">运作</div>
<div class="t" style="left:134.80px;top:262.64px;font-size:6.2px;line-height:6.2px;height:6.2px;color:#555;transform:scaleY(1.15);transform-origin:0 0;">2019/04/25</div>
<div class="t" style="left:174.70px;top:263.04px;font-size:6.1px;line-height:6.1px;height:6.1px;color:#555;-webkit-text-stroke:0.1px #555;width:18.02px;text-align-last:justify;transform:scaleY(1.06);transform-origin:0 0;">家庭场</div>
<div class="t" style="left:11.40px;top:273.48px;font-size:6.0px;line-height:6.0px;height:6.0px;color:#2568d4;-webkit-text-stroke:0.18px #2568d4;width:12.02px;text-align-last:justify;transform:scaleY(1.06);transform-origin:0 0;">配置</div>
<div class="t" style="left:36.80px;top:273.48px;font-size:6.0px;line-height:6.0px;height:6.0px;color:#2568d4;-webkit-text-stroke:0.18px #2568d4;width:12.02px;text-align-last:justify;transform:scaleY(1.06);transform-origin:0 0;">文档</div>
<div class="t" style="left:62.50px;top:273.48px;font-size:6.0px;line-height:6.0px;height:6.0px;color:#2568d4;-webkit-text-stroke:0.18px #2568d4;width:12.02px;text-align-last:justify;transform:scaleY(1.06);transform-origin:0 0;">分析</div>
<div class="t" style="left:87.60px;top:273.48px;font-size:6.0px;line-height:6.0px;height:6.0px;color:#2568d4;-webkit-text-stroke:0.18px #2568d4;width:12.02px;text-align-last:justify;transform:scaleY(1.06);transform-origin:0 0;">编辑</div>
<div class="t" style="left:113.80px;top:273.48px;font-size:6.15px;line-height:6.15px;height:6.15px;color:#555;-webkit-text-stroke:0.1px #555;width:12.02px;text-align-last:justify;transform:scaleY(1.06);transform-origin:0 0;">运作</div>
<div class="t" style="left:134.80px;top:273.08px;font-size:6.2px;line-height:6.2px;height:6.2px;color:#555;transform:scaleY(1.15);transform-origin:0 0;">2019/04/25</div>
<div class="t" style="left:174.70px;top:273.48px;font-size:6.1px;line-height:6.1px;height:6.1px;color:#555;-webkit-text-stroke:0.1px #555;width:18.02px;text-align-last:justify;transform:scaleY(1.06);transform-origin:0 0;">家庭场</div>
<div class="t" style="left:11.40px;top:283.91px;font-size:6.0px;line-height:6.0px;height:6.0px;color:#2568d4;-webkit-text-stroke:0.18px #2568d4;width:12.02px;text-align-last:justify;transform:scaleY(1.06);transform-origin:0 0;">配置</div>
<div class="t" style="left:36.80px;top:283.91px;font-size:6.0px;line-height:6.0px;height:6.0px;color:#2568d4;-webkit-text-stroke:0.18px #2568d4;width:12.02px;text-align-last:justify;transform:scaleY(1.06);transform-origin:0 0;">文档</div>
<div class="t" style="left:62.50px;top:283.91px;font-size:6.0px;line-height:6.0px;height:6.0px;color:#2568d4;-webkit-text-stroke:0.18px #2568d4;width:12.02px;text-align-last:justify;transform:scaleY(1.06);transform-origin:0 0;">分析</div>
<div class="t" style="left:87.60px;top:283.91px;font-size:6.0px;line-height:6.0px;height:6.0px;color:#2568d4;-webkit-text-stroke:0.18px #2568d4;width:12.02px;text-align-last:justify;transform:scaleY(1.06);transform-origin:0 0;">编辑</div>
<div class="t" style="left:113.80px;top:283.91px;font-size:6.15px;line-height:6.15px;height:6.15px;color:#555;-webkit-text-stroke:0.1px #555;width:12.02px;text-align-last:justify;transform:scaleY(1.06);transform-origin:0 0;">运作</div>
<div class="t" style="left:134.80px;top:283.51px;font-size:6.2px;line-height:6.2px;height:6.2px;color:#555;transform:scaleY(1.15);transform-origin:0 0;">2019/04/25</div>
<div class="t" style="left:174.70px;top:283.91px;font-size:6.1px;line-height:6.1px;height:6.1px;color:#555;-webkit-text-stroke:0.1px #555;width:18.02px;text-align-last:justify;transform:scaleY(1.06);transform-origin:0 0;">家庭场</div>
<div class="t" style="left:11.40px;top:294.35px;font-size:6.0px;line-height:6.0px;height:6.0px;color:#2568d4;-webkit-text-stroke:0.18px #2568d4;width:12.02px;text-align-last:justify;transform:scaleY(1.06);transform-origin:0 0;">配置</div>
<div class="t" style="left:36.80px;top:294.35px;font-size:6.0px;line-height:6.0px;height:6.0px;color:#2568d4;-webkit-text-stroke:0.18px #2568d4;width:12.02px;text-align-last:justify;transform:scaleY(1.06);transform-origin:0 0;">文档</div>
<div class="t" style="left:62.50px;top:294.35px;font-size:6.0px;line-height:6.0px;height:6.0px;color:#2568d4;-webkit-text-stroke:0.18px #2568d4;width:12.02px;text-align-last:justify;transform:scaleY(1.06);transform-origin:0 0;">分析</div>
<div class="t" style="left:87.60px;top:294.35px;font-size:6.0px;line-height:6.0px;height:6.0px;color:#2568d4;-webkit-text-stroke:0.18px #2568d4;width:12.02px;text-align-last:justify;transform:scaleY(1.06);transform-origin:0 0;">编辑</div>
<div class="t" style="left:113.80px;top:294.35px;font-size:6.15px;line-height:6.15px;height:6.15px;color:#555;-webkit-text-stroke:0.1px #555;width:12.02px;text-align-last:justify;transform:scaleY(1.06);transform-origin:0 0;">运作</div>
<div class="t" style="left:134.80px;top:293.95px;font-size:6.2px;line-height:6.2px;height:6.2px;color:#555;transform:scaleY(1.15);transform-origin:0 0;">2019/04/25</div>
<div class="t" style="left:174.70px;top:294.35px;font-size:6.1px;line-height:6.1px;height:6.1px;color:#555;-webkit-text-stroke:0.1px #555;width:18.02px;text-align-last:justify;transform:scaleY(1.06);transform-origin:0 0;">家庭场</div>
<div class="t" style="left:11.40px;top:304.78px;font-size:6.0px;line-height:6.0px;height:6.0px;color:#2568d4;-webkit-text-stroke:0.18px #2568d4;width:12.02px;text-align-last:justify;transform:scaleY(1.06);transform-origin:0 0;">配置</div>
<div class="t" style="left:36.80px;top:304.78px;font-size:6.0px;line-height:6.0px;height:6.0px;color:#2568d4;-webkit-text-stroke:0.18px #2568d4;width:12.02px;text-align-last:justify;transform:scaleY(1.06);transform-origin:0 0;">文档</div>
<div class="t" style="left:62.50px;top:304.78px;font-size:6.0px;line-height:6.0px;height:6.0px;color:#2568d4;-webkit-text-stroke:0.18px #2568d4;width:12.02px;text-align-last:justify;transform:scaleY(1.06);transform-origin:0 0;">分析</div>
<div class="t" style="left:87.60px;top:304.78px;font-size:6.0px;line-height:6.0px;height:6.0px;color:#2568d4;-webkit-text-stroke:0.18px #2568d4;width:12.02px;text-align-last:justify;transform:scaleY(1.06);transform-origin:0 0;">编辑</div>
<div class="t" style="left:113.80px;top:304.78px;font-size:6.15px;line-height:6.15px;height:6.15px;color:#555;-webkit-text-stroke:0.1px #555;width:12.02px;text-align-last:justify;transform:scaleY(1.06);transform-origin:0 0;">运作</div>
<div class="t" style="left:134.80px;top:304.38px;font-size:6.2px;line-height:6.2px;height:6.2px;color:#555;transform:scaleY(1.15);transform-origin:0 0;">2019/04/25</div>
<div class="t" style="left:174.70px;top:304.78px;font-size:6.1px;line-height:6.1px;height:6.1px;color:#555;-webkit-text-stroke:0.1px #555;width:18.02px;text-align-last:justify;transform:scaleY(1.06);transform-origin:0 0;">家庭场</div>
<div class="t" style="left:11.40px;top:315.22px;font-size:6.0px;line-height:6.0px;height:6.0px;color:#2568d4;-webkit-text-stroke:0.18px #2568d4;width:12.02px;text-align-last:justify;transform:scaleY(1.06);transform-origin:0 0;">配置</div>
<div class="t" style="left:36.80px;top:315.22px;font-size:6.0px;line-height:6.0px;height:6.0px;color:#2568d4;-webkit-text-stroke:0.18px #2568d4;width:12.02px;text-align-last:justify;transform:scaleY(1.06);transform-origin:0 0;">文档</div>
<div class="t" style="left:62.50px;top:315.22px;font-size:6.0px;line-height:6.0px;height:6.0px;color:#2568d4;-webkit-text-stroke:0.18px #2568d4;width:12.02px;text-align-last:justify;transform:scaleY(1.06);transform-origin:0 0;">分析</div>
<div class="t" style="left:87.60px;top:315.22px;font-size:6.0px;line-height:6.0px;height:6.0px;color:#2568d4;-webkit-text-stroke:0.18px #2568d4;width:12.02px;text-align-last:justify;transform:scaleY(1.06);transform-origin:0 0;">编辑</div>
<div class="t" style="left:113.80px;top:315.22px;font-size:6.15px;line-height:6.15px;height:6.15px;color:#555;-webkit-text-stroke:0.1px #555;width:12.02px;text-align-last:justify;transform:scaleY(1.06);transform-origin:0 0;">运作</div>
<div class="t" style="left:134.80px;top:314.82px;font-size:6.2px;line-height:6.2px;height:6.2px;color:#555;transform:scaleY(1.15);transform-origin:0 0;">2019/04/25</div>
<div class="t" style="left:174.70px;top:315.22px;font-size:6.1px;line-height:6.1px;height:6.1px;color:#555;-webkit-text-stroke:0.1px #555;width:18.02px;text-align-last:justify;transform:scaleY(1.06);transform-origin:0 0;">家庭场</div>
<div class="t" style="left:11.40px;top:325.66px;font-size:6.0px;line-height:6.0px;height:6.0px;color:#2568d4;-webkit-text-stroke:0.18px #2568d4;width:12.02px;text-align-last:justify;transform:scaleY(1.06);transform-origin:0 0;">配置</div>
<div class="t" style="left:36.80px;top:325.66px;font-size:6.0px;line-height:6.0px;height:6.0px;color:#2568d4;-webkit-text-stroke:0.18px #2568d4;width:12.02px;text-align-last:justify;transform:scaleY(1.06);transform-origin:0 0;">文档</div>
<div class="t" style="left:62.50px;top:325.66px;font-size:6.0px;line-height:6.0px;height:6.0px;color:#2568d4;-webkit-text-stroke:0.18px #2568d4;width:12.02px;text-align-last:justify;transform:scaleY(1.06);transform-origin:0 0;">分析</div>
<div class="t" style="left:87.60px;top:325.66px;font-size:6.0px;line-height:6.0px;height:6.0px;color:#2568d4;-webkit-text-stroke:0.18px #2568d4;width:12.02px;text-align-last:justify;transform:scaleY(1.06);transform-origin:0 0;">编辑</div>
<div class="t" style="left:113.80px;top:325.66px;font-size:6.15px;line-height:6.15px;height:6.15px;color:#555;-webkit-text-stroke:0.1px #555;width:12.02px;text-align-last:justify;transform:scaleY(1.06);transform-origin:0 0;">运作</div>
<div class="t" style="left:134.80px;top:325.26px;font-size:6.2px;line-height:6.2px;height:6.2px;color:#555;transform:scaleY(1.15);transform-origin:0 0;">2019/04/25</div>
<div class="t" style="left:174.70px;top:325.66px;font-size:6.1px;line-height:6.1px;height:6.1px;color:#555;-webkit-text-stroke:0.1px #555;width:18.02px;text-align-last:justify;transform:scaleY(1.06);transform-origin:0 0;">家庭场</div>
<div class="t" style="left:11.40px;top:336.09px;font-size:6.0px;line-height:6.0px;height:6.0px;color:#2568d4;-webkit-text-stroke:0.18px #2568d4;width:12.02px;text-align-last:justify;transform:scaleY(1.06);transform-origin:0 0;">配置</div>
<div class="t" style="left:36.80px;top:336.09px;font-size:6.0px;line-height:6.0px;height:6.0px;color:#2568d4;-webkit-text-stroke:0.18px #2568d4;width:12.02px;text-align-last:justify;transform:scaleY(1.06);transform-origin:0 0;">文档</div>
<div class="t" style="left:62.50px;top:336.09px;font-size:6.0px;line-height:6.0px;height:6.0px;color:#2568d4;-webkit-text-stroke:0.18px #2568d4;width:12.02px;text-align-last:justify;transform:scaleY(1.06);transform-origin:0 0;">分析</div>
<div class="t" style="left:87.60px;top:336.09px;font-size:6.0px;line-height:6.0px;height:6.0px;color:#2568d4;-webkit-text-stroke:0.18px #2568d4;width:12.02px;text-align-last:justify;transform:scaleY(1.06);transform-origin:0 0;">编辑</div>
<div class="t" style="left:113.80px;top:336.09px;font-size:6.15px;line-height:6.15px;height:6.15px;color:#555;-webkit-text-stroke:0.1px #555;width:12.02px;text-align-last:justify;transform:scaleY(1.06);transform-origin:0 0;">运作</div>
<div class="t" style="left:134.80px;top:335.69px;font-size:6.2px;line-height:6.2px;height:6.2px;color:#555;transform:scaleY(1.15);transform-origin:0 0;">2019/04/25</div>
<div class="t" style="left:174.70px;top:336.09px;font-size:6.1px;line-height:6.1px;height:6.1px;color:#555;-webkit-text-stroke:0.1px #555;width:17.11px;text-align-last:justify;transform:scaleY(1.06);transform-origin:0 0;">华歌d.</div>
<div class="t" style="left:11.40px;top:346.53px;font-size:6.0px;line-height:6.0px;height:6.0px;color:#2568d4;-webkit-text-stroke:0.18px #2568d4;width:12.02px;text-align-last:justify;transform:scaleY(1.06);transform-origin:0 0;">配置</div>
<div class="t" style="left:36.80px;top:346.53px;font-size:6.0px;line-height:6.0px;height:6.0px;color:#2568d4;-webkit-text-stroke:0.18px #2568d4;width:12.02px;text-align-last:justify;transform:scaleY(1.06);transform-origin:0 0;">文档</div>
<div class="t" style="left:62.50px;top:346.53px;font-size:6.0px;line-height:6.0px;height:6.0px;color:#2568d4;-webkit-text-stroke:0.18px #2568d4;width:12.02px;text-align-last:justify;transform:scaleY(1.06);transform-origin:0 0;">分析</div>
<div class="t" style="left:87.60px;top:346.53px;font-size:6.0px;line-height:6.0px;height:6.0px;color:#2568d4;-webkit-text-stroke:0.18px #2568d4;width:12.02px;text-align-last:justify;transform:scaleY(1.06);transform-origin:0 0;">编辑</div>
<div class="t" style="left:113.80px;top:346.53px;font-size:6.15px;line-height:6.15px;height:6.15px;color:#555;-webkit-text-stroke:0.1px #555;width:12.02px;text-align-last:justify;transform:scaleY(1.06);transform-origin:0 0;">运作</div>
<div class="t" style="left:134.80px;top:346.13px;font-size:6.2px;line-height:6.2px;height:6.2px;color:#555;transform:scaleY(1.15);transform-origin:0 0;">2019/04/25</div>
<div class="t" style="left:174.70px;top:346.53px;font-size:6.1px;line-height:6.1px;height:6.1px;color:#555;-webkit-text-stroke:0.1px #555;width:136.57px;text-align-last:justify;transform:scaleY(1.06);transform-origin:0 0;letter-spacing:-0.11px;">华歌d.smarthome旗舰版套餐方案_20190425135843</div>
<div class="t" style="left:11.40px;top:356.96px;font-size:6.0px;line-height:6.0px;height:6.0px;color:#2568d4;-webkit-text-stroke:0.18px #2568d4;width:12.02px;text-align-last:justify;transform:scaleY(1.06);transform-origin:0 0;">配置</div>
<div class="t" style="left:36.80px;top:356.96px;font-size:6.0px;line-height:6.0px;height:6.0px;color:#2568d4;-webkit-text-stroke:0.18px #2568d4;width:12.02px;text-align-last:justify;transform:scaleY(1.06);transform-origin:0 0;">文档</div>
<div class="t" style="left:62.50px;top:356.96px;font-size:6.0px;line-height:6.0px;height:6.0px;color:#2568d4;-webkit-text-stroke:0.18px #2568d4;width:12.02px;text-align-last:justify;transform:scaleY(1.06);transform-origin:0 0;">分析</div>
<div class="t" style="left:87.60px;top:356.96px;font-size:6.0px;line-height:6.0px;height:6.0px;color:#2568d4;-webkit-text-stroke:0.18px #2568d4;width:12.02px;text-align-last:justify;transform:scaleY(1.06);transform-origin:0 0;">编辑</div>
<div class="t" style="left:113.80px;top:356.96px;font-size:6.15px;line-height:6.15px;height:6.15px;color:#555;-webkit-text-stroke:0.1px #555;width:12.02px;text-align-last:justify;transform:scaleY(1.06);transform-origin:0 0;">运作</div>
<div class="t" style="left:134.80px;top:356.56px;font-size:6.2px;line-height:6.2px;height:6.2px;color:#555;transform:scaleY(1.15);transform-origin:0 0;">2019/04/25</div>
<div class="t" style="left:174.70px;top:356.96px;font-size:6.1px;line-height:6.1px;height:6.1px;color:#555;-webkit-text-stroke:0.1px #555;width:136.57px;text-align-last:justify;transform:scaleY(1.06);transform-origin:0 0;letter-spacing:-0.11px;">华歌d.smarthome标准款套餐方案_20190425135836</div>
<div class="t" style="left:11.40px;top:367.40px;font-size:6.0px;line-height:6.0px;height:6.0px;color:#2568d4;-webkit-text-stroke:0.18px #2568d4;width:12.02px;text-align-last:justify;transform:scaleY(1.06);transform-origin:0 0;">配置</div>
<div class="t" style="left:36.80px;top:367.40px;font-size:6.0px;line-height:6.0px;height:6.0px;color:#2568d4;-webkit-text-stroke:0.18px #2568d4;width:12.02px;text-align-last:justify;transform:scaleY(1.06);transform-origin:0 0;">文档</div>
<div class="t" style="left:62.50px;top:367.40px;font-size:6.0px;line-height:6.0px;height:6.0px;color:#2568d4;-webkit-text-stroke:0.18px #2568d4;width:12.02px;text-align-last:justify;transform:scaleY(1.06);transform-origin:0 0;">分析</div>
<div class="t" style="left:87.60px;top:367.40px;font-size:6.0px;line-height:6.0px;height:6.0px;color:#2568d4;-webkit-text-stroke:0.18px #2568d4;width:12.02px;text-align-last:justify;transform:scaleY(1.06);transform-origin:0 0;">编辑</div>
<div class="t" style="left:113.80px;top:367.40px;font-size:6.15px;line-height:6.15px;height:6.15px;color:#555;-webkit-text-stroke:0.1px #555;width:12.02px;text-align-last:justify;transform:scaleY(1.06);transform-origin:0 0;">运作</div>
<div class="t" style="left:134.80px;top:367.00px;font-size:6.2px;line-height:6.2px;height:6.2px;color:#555;transform:scaleY(1.15);transform-origin:0 0;">2019/04/25</div>
<div class="t" style="left:174.70px;top:367.40px;font-size:6.1px;line-height:6.1px;height:6.1px;color:#555;-webkit-text-stroke:0.1px #555;width:136.57px;text-align-last:justify;transform:scaleY(1.06);transform-origin:0 0;letter-spacing:-0.11px;">华歌d.smarthome基础款套餐方案_20190425135827</div>
<div class="r" style="left:0.00px;top:388.00px;width:685.00px;height:20.00px;background:#fffad9;"></div>
<div class="r" style="left:0.00px;top:387.20px;width:685.00px;height:0.90px;background:#e9e9e4;"></div>
<svg width="685" height="427" viewBox="0 0 685 427" style="pointer-events:none">
<path d="M3.8,397.1 L8.2,394.6 L8.2,399.6 Z" fill="#fb6d14"/>
<rect x="8.7" y="395" width="0.9" height="4.2" rx="0.4" fill="#fb6d14" opacity="0.75"/>
<path d="M668.2,396 L674.8,402.2 M674.8,396 L668.2,402.2" stroke="#9a9a9a" stroke-width="0.9" fill="none"/>
</svg>
<div class="t" style="left:19.60px;top:394.50px;font-size:6.2px;line-height:6.2px;height:6.2px;color:#222;font-weight:bold;width:14.08px;text-align-last:justify;transform:scaleY(1.1);transform-origin:0 0;">公告:</div>
<div class="t" style="left:37.80px;top:394.50px;font-size:6.3px;line-height:6.3px;height:6.3px;color:#222;font-weight:bold;width:281.21px;text-align-last:justify;transform:scaleY(1.1);transform-origin:0 0;letter-spacing:0.09px;">报价优选现在已推出APP端与微信小程序端，可随时随地在线查看使用，更多功能请点击查看详情了解！</div>
<div class="t" style="left:339.70px;top:394.80px;font-size:5.9px;line-height:5.9px;height:5.9px;color:#f4781c;font-weight:bold;width:24.02px;text-align-last:justify;transform:scaleY(1.1);transform-origin:0 0;">查看详情</div>
<div class="r" style="left:0.00px;top:408.00px;width:685.00px;height:19.00px;background:#0e0e13;"></div>
<div class="r" style="left:22.60px;top:408.00px;width:171.20px;height:19.00px;background:#343437;"></div>
<svg width="685" height="427" viewBox="0 0 685 427" style="pointer-events:none">
<!-- windows logo -->
<path d="M6.8,414.4 l3.1,-0.45 v3.1 h-3.1 z M10.5,413.85 l3.9,-0.55 v3.75 h-3.9 z M6.8,417.7 h3.1 v3.1 l-3.1,-0.45 z M10.5,417.7 h3.9 v3.75 l-3.9,-0.55 z" fill="#fff"/>
<circle cx="32.1" cy="417.2" r="4.3" fill="none" stroke="#f4f4f4" stroke-width="1.5"/>
<!-- mic -->
<rect x="182.4" y="413.3" width="1.9" height="4.6" rx="0.95" fill="#b9b9bb"/>
<path d="M181.1,416.2 q0,3 2.25,3 q2.25,0 2.25,-3 M183.35,419.2 v1.6" stroke="#b9b9bb" stroke-width="0.6" fill="none"/>
<!-- task view -->
<rect x="202.3" y="414" width="6.8" height="6" fill="none" stroke="#e8e8e8" stroke-width="0.9"/>
<path d="M200.3,415 v4 M211.1,415 v4" stroke="#e8e8e8" stroke-width="0.9"/>
<!-- fan app -->
<g fill="#f2f2f2">
<circle cx="228.2" cy="414" r="2.7"/><circle cx="233.6" cy="414.3" r="2.7"/><circle cx="227.9" cy="419.6" r="2.7"/><circle cx="233.4" cy="419.9" r="2.7"/>
</g>
<circle cx="230.8" cy="416.9" r="1.0" fill="#0e0e13"/>
<path d="M228.2,414 L233.4,419.9 M233.6,414.3 L227.9,419.6" stroke="#0e0e13" stroke-width="0.6"/>
<!-- app active -->
<rect x="248" y="425.2" width="19.6" height="1.8" fill="#a6c8ee"/>
<circle cx="258" cy="417" r="5.9" fill="#e6be55"/>
<circle cx="258.2" cy="416.8" r="3.6" fill="#fff6dc"/>
<circle cx="258.1" cy="416.8" r="2.1" fill="#b98f2c"/>
<!-- explorer -->
<path d="M276.4,412.6 h4.2 l0.9,1.2 h6.4 v7.4 h-11.5 z" fill="#f6c544"/>
<rect x="277.6" y="416" width="9.2" height="5.2" fill="#39a0e8"/>
<rect x="279.8" y="418" width="4.8" height="3.2" fill="#f9dd86"/>
<!-- tray -->
<path d="M553.3,418.6 L556.3,415.6 L559.3,418.6" stroke="#f0f0f0" stroke-width="0.8" fill="none"/>
<rect x="564.2" y="415.2" width="7" height="3.8" fill="none" stroke="#f0f0f0" stroke-width="0.7"/>
<rect x="564.8" y="415.8" width="3.4" height="2.6" fill="#f0f0f0"/><rect x="571.4" y="416.3" width="0.8" height="1.6" fill="#f0f0f0"/>
<path d="M577,420 L583.4,420 L583.4,413.8 Z" fill="none" stroke="#e8e8e8" stroke-width="0.7"/>
<path d="M578.6,420 a4.8,4.8 0 0 1 4.8,-4.6 M580.6,420 a2.8,2.8 0 0 1 2.8,-2.6" stroke="#e8e8e8" stroke-width="0.6" fill="none"/>
<path d="M587.6,416 h1.6 l2,-1.8 v6 l-2,-1.8 h-1.6 z" fill="#f0f0f0"/>
<path d="M592.4,415.6 q1.2,1.6 0,3.2 M593.8,414.6 q2,2.6 0,5.2" stroke="#f0f0f0" stroke-width="0.6" fill="none"/>
<path d="M600,413.6 h8 v5.8 h-2.8 l-1.2,1.5 l-1.2,-1.5 h-2.8 z" fill="none" stroke="#f0f0f0" stroke-width="0.8"/>
<path d="M601.8,415.4 h4.4 M601.8,417.2 h4.4" stroke="#f0f0f0" stroke-width="0.5"/>
<rect x="626" y="412.9" width="7.4" height="8.2" rx="1.2" fill="#f0492a" transform="rotate(-8 629.7 417)"/>
</svg>
<div class="t" style="left:41.40px;top:414.00px;font-size:6.8px;line-height:6.8px;height:6.8px;color:#8a8a8c;width:49.02px;text-align-last:justify;">有问题尽管问我</div>
<div class="t" style="left:612.60px;top:413.60px;font-size:6.6px;line-height:6.6px;height:6.6px;color:#f0f0f0;-webkit-text-stroke:0.1px #f0f0f0;transform:scaleY(1.05);transform-origin:0 0;">英</div>
<div class="t" style="left:627.60px;top:413.20px;font-size:7.2px;line-height:7.2px;height:7.2px;color:#fff;font-weight:bold;-webkit-text-stroke:0.08px #fff;transform:rotate(-8deg);">S</div>
<div class="t" style="left:655.00px;top:409.60px;font-size:6.1px;line-height:6.1px;height:6.1px;color:#fff;-webkit-text-stroke:0.1px #fff;">21:18</div>
<div class="t" style="left:644.60px;top:417.40px;font-size:6.1px;line-height:6.1px;height:6.1px;color:#fff;-webkit-text-stroke:0.1px #fff;width:34.97px;text-align-last:justify;">09/06/星期日</div>
<div class="r" style="left:192.3px;top:87.4px;width:315.7px;height:255.0px;background:#fff;border:0.5px solid #b8bcc2;"></div>
<svg width="685" height="427" viewBox="0 0 685 427"><rect x="192.20000000000002" y="87.3" width="317.8" height="10.5" fill="#2a86de"/><rect x="192.20000000000002" y="87.2" width="317.4" height="0.7" fill="#2a6fb4"/><rect x="192.20000000000002" y="97.8" width="0.8" height="245.4" fill="#8e979f"/><rect x="509.2" y="97.8" width="0.8" height="246" fill="#606060"/><rect x="192.20000000000002" y="343.0" width="317.8" height="0.8" fill="#6c6c6c"/></svg>
<svg width="685" height="427" viewBox="0 0 685 427" style="pointer-events:none">
<circle cx="198" cy="92.8" r="3.8" fill="#fdfbf2"/><circle cx="198" cy="92.8" r="2.3" fill="none" stroke="#f0c352" stroke-width="1.25"/>
<path d="M499.7,92.5 L503.4,96.2 M503.4,92.5 L499.7,96.2" stroke="#fff" stroke-width="1.15" fill="none"/>
</svg>
<svg width="685" height="427" viewBox="0 0 685 427"><rect x="193.4" y="99.9" width="307.4" height="8.8" fill="#a8c5ec"/></svg>
<div class="t" style="left:286.40px;top:100.50px;font-size:7.3px;line-height:7.3px;height:7.3px;color:#2a2a3a;font-weight:bold;width:121.80px;text-align-last:justify;transform:scaleY(1.02);transform-origin:0 0;letter-spacing:0.58px;">千家"方案云"，正在不断的补充中！</div>
<div class="r" style="left:500.80px;top:98.00px;width:8.40px;height:245.00px;background:#f0f0f0;"></div>
<svg width="685" height="427" viewBox="0 0 685 427"><rect x="502.0" y="112.0" width="7.2" height="208.0" fill="#c6c6c6"/></svg>
<svg width="685" height="427" viewBox="0 0 685 427" style="pointer-events:none">
<path d="M503,108.2 L505.2,106 L507.4,108.2" stroke="#333" stroke-width="1.1" fill="none"/>
<path d="M502.8,332.6 L505,334.8 L507.2,332.6" stroke="#333" stroke-width="1.1" fill="none"/>
</svg>
<div class="t" style="left:194.40px;top:113.20px;font-size:4.7px;line-height:4.7px;height:4.7px;color:#222;-webkit-text-stroke:0.1px #222;width:11.33px;text-align-last:justify;transform:scaleY(1.05);transform-origin:0 0;">搜索:</div>
<svg width="685" height="427" viewBox="0 0 685 427"><rect x="204.5" y="110.2" width="163" height="8.2" fill="#fff" stroke="#b4b4b4" stroke-width="0.6"/><path d="M204.5,118.4 V110.2 H367.5" fill="none" stroke="#808080" stroke-width="0.6"/></svg>
<div class="r" style="left:371.0px;top:110.2px;width:13.2px;height:7.3px;background:#f4f4f4;border:0.5px solid #c8c8c8;border-radius:1px;"></div>
<div class="r" style="left:386.9px;top:110.2px;width:14.2px;height:7.3px;background:#f4f4f4;border:0.5px solid #c8c8c8;border-radius:1px;"></div>
<div class="t" style="left:373.00px;top:111.80px;font-size:4.9px;line-height:4.9px;height:4.9px;color:#333;-webkit-text-stroke:0.25px #333;width:10.02px;text-align-last:justify;transform:scaleY(1.05);transform-origin:0 0;">搜索</div>
<div class="t" style="left:389.40px;top:111.80px;font-size:4.9px;line-height:4.9px;height:4.9px;color:#333;-webkit-text-stroke:0.25px #333;width:10.02px;text-align-last:justify;transform:scaleY(1.05);transform-origin:0 0;">重置</div>
<div class="t" style="left:403.00px;top:113.30px;font-size:4.75px;line-height:4.75px;height:4.75px;color:#777;-webkit-text-stroke:0.1px #777;width:63.19px;text-align-last:justify;">可多个关键词搜索(空格分隔)</div>
<div class="t" style="left:201.10px;top:123.30px;font-size:4.75px;line-height:4.75px;height:4.75px;color:#3692de;-webkit-text-stroke:0.05px #3692de;width:20.02px;text-align-last:justify;transform:scaleY(1.05);transform-origin:0 0;">智能家居</div>
<div class="t" style="left:209.30px;top:131.37px;font-size:4.75px;line-height:4.75px;height:4.75px;color:#3692de;-webkit-text-stroke:0.05px #3692de;width:20.02px;text-align-last:justify;transform:scaleY(1.05);transform-origin:0 0;">紫光物联</div>
<div class="t" style="left:209.30px;top:139.44px;font-size:4.75px;line-height:4.75px;height:4.75px;color:#3692de;-webkit-text-stroke:0.05px #3692de;width:39.33px;text-align-last:justify;transform:scaleY(1.05);transform-origin:0 0;">华歌d.SmartHome</div>
<div class="t" style="left:201.10px;top:147.51px;font-size:4.75px;line-height:4.75px;height:4.75px;color:#3692de;-webkit-text-stroke:0.05px #3692de;width:20.02px;text-align-last:justify;transform:scaleY(1.05);transform-origin:0 0;">萤石智能</div>
<div class="t" style="left:209.30px;top:155.58px;font-size:4.75px;line-height:4.75px;height:4.75px;color:#3692de;-webkit-text-stroke:0.05px #3692de;width:20.02px;text-align-last:justify;transform:scaleY(1.05);transform-origin:0 0;">家庭场景</div>
<div class="t" style="left:209.30px;top:163.65px;font-size:4.75px;line-height:4.75px;height:4.75px;color:#3692de;-webkit-text-stroke:0.05px #3692de;width:20.02px;text-align-last:justify;transform:scaleY(1.05);transform-origin:0 0;">别墅场景</div>
<div class="t" style="left:209.30px;top:171.72px;font-size:4.75px;line-height:4.75px;height:4.75px;color:#3692de;-webkit-text-stroke:0.05px #3692de;width:20.02px;text-align-last:justify;transform:scaleY(1.05);transform-origin:0 0;">商铺场景</div>
<svg width="685" height="427" viewBox="0 0 685 427" style="pointer-events:none">
<g stroke="#9c9c9c" stroke-width="0.6" fill="none">
<path d="M197.1,126.4 V147" stroke-dasharray="1.6,1.2"/>
<path d="M198.8,124.6 h2 M198.8,148.6 h2"/>
<path d="M206,127.2 V140.4 M206,132.5 h2.8 M206,140.4 h2.8"/>
<path d="M206,151.2 V172.8 M206,156.6 h2.8 M206,164.7 h2.8 M206,172.8 h2.8"/>
</g>
<g fill="#c9ccd0" stroke="#979ba0" stroke-width="0.55"><rect x="195.6" y="123.2" width="2.8" height="2.8" rx="0.8"/><rect x="195.6" y="147.0" width="2.8" height="2.8" rx="0.8"/></g>
<path d="M196.2,124.6 h1.6 M196.2,148.4 h1.6" stroke="#6a6e74" stroke-width="0.5"/>
</svg>
<svg width="685" height="427" viewBox="0 0 685 427"><rect x="308.0" y="120.8" width="192.6" height="9.5" fill="#c6c6c6"/></svg>
<div class="t" style="left:310.30px;top:123.10px;font-size:5.15px;line-height:5.15px;height:5.15px;color:#3c3c3c;font-weight:bold;width:20.02px;text-align-last:justify;">方案名称</div>
<div class="t" style="left:432.20px;top:123.10px;font-size:5.15px;line-height:5.15px;height:5.15px;color:#3c3c3c;font-weight:bold;width:20.02px;text-align-last:justify;">更新时间</div>
<div class="t" style="left:479.60px;top:123.10px;font-size:5.15px;line-height:5.15px;height:5.15px;color:#3c3c3c;font-weight:bold;width:9.43px;text-align-last:justify;letter-spacing:-0.3px;">详情</div>
<div class="t" style="left:310.30px;top:134.05px;font-size:4.7px;line-height:4.7px;height:4.7px;color:#4a4a4a;width:72.38px;text-align-last:justify;transform:scaleY(1.15);transform-origin:0 0;">华歌d.smarthome基础款套餐方案</div>
<div class="t" style="left:432.50px;top:133.85px;font-size:4.9px;line-height:4.9px;height:4.9px;color:#585858;transform:scaleY(1.2);transform-origin:0 0;">2019-03-21</div>
<div class="t" style="left:480.00px;top:134.05px;font-size:4.6px;line-height:4.6px;height:4.6px;color:#3696e4;width:10.02px;text-align-last:justify;transform:scaleY(1.12);transform-origin:0 0;text-decoration:underline;text-decoration-thickness:0.4px;text-underline-offset:0.2px;">下载</div>
<div class="t" style="left:310.30px;top:144.99px;font-size:4.7px;line-height:4.7px;height:4.7px;color:#4a4a4a;width:72.38px;text-align-last:justify;transform:scaleY(1.15);transform-origin:0 0;">华歌d.smarthome标准款套餐方案</div>
<div class="t" style="left:432.50px;top:144.79px;font-size:4.9px;line-height:4.9px;height:4.9px;color:#585858;transform:scaleY(1.2);transform-origin:0 0;">2019-03-21</div>
<div class="t" style="left:480.00px;top:144.99px;font-size:4.6px;line-height:4.6px;height:4.6px;color:#3696e4;width:10.02px;text-align-last:justify;transform:scaleY(1.12);transform-origin:0 0;text-decoration:underline;text-decoration-thickness:0.4px;text-underline-offset:0.2px;">下载</div>
<div class="t" style="left:310.30px;top:155.93px;font-size:4.7px;line-height:4.7px;height:4.7px;color:#4a4a4a;width:72.38px;text-align-last:justify;transform:scaleY(1.15);transform-origin:0 0;">华歌d.smarthome旗舰版套餐方案</div>
<div class="t" style="left:432.50px;top:155.73px;font-size:4.9px;line-height:4.9px;height:4.9px;color:#585858;transform:scaleY(1.2);transform-origin:0 0;">2019-03-21</div>
<div class="t" style="left:480.00px;top:155.93px;font-size:4.6px;line-height:4.6px;height:4.6px;color:#3696e4;width:10.02px;text-align-last:justify;transform:scaleY(1.12);transform-origin:0 0;text-decoration:underline;text-decoration-thickness:0.4px;text-underline-offset:0.2px;">下载</div>
<div class="t" style="left:310.30px;top:166.87px;font-size:4.7px;line-height:4.7px;height:4.7px;color:#4a4a4a;width:72.38px;text-align-last:justify;transform:scaleY(1.15);transform-origin:0 0;">华歌d.smarthome豪华版套餐方案</div>
<div class="t" style="left:432.50px;top:166.67px;font-size:4.9px;line-height:4.9px;height:4.9px;color:#585858;transform:scaleY(1.2);transform-origin:0 0;">2019-03-21</div>
<div class="t" style="left:480.00px;top:166.87px;font-size:4.6px;line-height:4.6px;height:4.6px;color:#3696e4;width:10.02px;text-align-last:justify;transform:scaleY(1.12);transform-origin:0 0;text-decoration:underline;text-decoration-thickness:0.4px;text-underline-offset:0.2px;">下载</div>
<div class="t" style="left:310.30px;top:177.81px;font-size:4.7px;line-height:4.7px;height:4.7px;color:#4a4a4a;width:51.58px;text-align-last:justify;transform:scaleY(1.15);transform-origin:0 0;">家庭场景-儿童呵护方案</div>
<div class="t" style="left:432.50px;top:177.61px;font-size:4.9px;line-height:4.9px;height:4.9px;color:#585858;transform:scaleY(1.2);transform-origin:0 0;">2019-03-21</div>
<div class="t" style="left:480.00px;top:177.81px;font-size:4.6px;line-height:4.6px;height:4.6px;color:#3696e4;width:10.02px;text-align-last:justify;transform:scaleY(1.12);transform-origin:0 0;text-decoration:underline;text-decoration-thickness:0.4px;text-underline-offset:0.2px;">下载</div>
<div class="t" style="left:310.30px;top:188.75px;font-size:4.7px;line-height:4.7px;height:4.7px;color:#4a4a4a;width:51.58px;text-align-last:justify;transform:scaleY(1.15);transform-origin:0 0;">家庭场景-行车记录方案</div>
<div class="t" style="left:432.50px;top:188.55px;font-size:4.9px;line-height:4.9px;height:4.9px;color:#585858;transform:scaleY(1.2);transform-origin:0 0;">2019-03-21</div>
<div class="t" style="left:480.00px;top:188.75px;font-size:4.6px;line-height:4.6px;height:4.6px;color:#3696e4;width:10.02px;text-align-last:justify;transform:scaleY(1.12);transform-origin:0 0;text-decoration:underline;text-decoration-thickness:0.4px;text-underline-offset:0.2px;">下载</div>
<div class="t" style="left:310.30px;top:199.69px;font-size:4.7px;line-height:4.7px;height:4.7px;color:#4a4a4a;width:51.58px;text-align-last:justify;transform:scaleY(1.15);transform-origin:0 0;">家庭场景-家有爱宠方案</div>
<div class="t" style="left:432.50px;top:199.49px;font-size:4.9px;line-height:4.9px;height:4.9px;color:#585858;transform:scaleY(1.2);transform-origin:0 0;">2019-03-21</div>
<div class="t" style="left:480.00px;top:199.69px;font-size:4.6px;line-height:4.6px;height:4.6px;color:#3696e4;width:10.02px;text-align-last:justify;transform:scaleY(1.12);transform-origin:0 0;text-decoration:underline;text-decoration-thickness:0.4px;text-underline-offset:0.2px;">下载</div>
<div class="t" style="left:310.30px;top:210.63px;font-size:4.7px;line-height:4.7px;height:4.7px;color:#4a4a4a;width:61.58px;text-align-last:justify;transform:scaleY(1.15);transform-origin:0 0;">家庭场景-智能家居豪华套装</div>
<div class="t" style="left:432.50px;top:210.43px;font-size:4.9px;line-height:4.9px;height:4.9px;color:#585858;transform:scaleY(1.2);transform-origin:0 0;">2019-03-21</div>
<div class="t" style="left:480.00px;top:210.63px;font-size:4.6px;line-height:4.6px;height:4.6px;color:#3696e4;width:10.02px;text-align-last:justify;transform:scaleY(1.12);transform-origin:0 0;text-decoration:underline;text-decoration-thickness:0.4px;text-underline-offset:0.2px;">下载</div>
<div class="t" style="left:310.30px;top:221.57px;font-size:4.7px;line-height:4.7px;height:4.7px;color:#4a4a4a;width:51.58px;text-align-last:justify;transform:scaleY(1.15);transform-origin:0 0;">家庭场景-关爱老人方案</div>
<div class="t" style="left:432.50px;top:221.37px;font-size:4.9px;line-height:4.9px;height:4.9px;color:#585858;transform:scaleY(1.2);transform-origin:0 0;">2019-03-21</div>
<div class="t" style="left:480.00px;top:221.57px;font-size:4.6px;line-height:4.6px;height:4.6px;color:#3696e4;width:10.02px;text-align-last:justify;transform:scaleY(1.12);transform-origin:0 0;text-decoration:underline;text-decoration-thickness:0.4px;text-underline-offset:0.2px;">下载</div>
<div class="t" style="left:310.30px;top:232.51px;font-size:4.7px;line-height:4.7px;height:4.7px;color:#4a4a4a;width:51.58px;text-align-last:justify;transform:scaleY(1.15);transform-origin:0 0;">家庭场景-婴儿呵护方案</div>
<div class="t" style="left:432.50px;top:232.31px;font-size:4.9px;line-height:4.9px;height:4.9px;color:#585858;transform:scaleY(1.2);transform-origin:0 0;">2019-03-21</div>
<div class="t" style="left:480.00px;top:232.51px;font-size:4.6px;line-height:4.6px;height:4.6px;color:#3696e4;width:10.02px;text-align-last:justify;transform:scaleY(1.12);transform-origin:0 0;text-decoration:underline;text-decoration-thickness:0.4px;text-underline-offset:0.2px;">下载</div>
<div class="t" style="left:310.30px;top:243.45px;font-size:4.7px;line-height:4.7px;height:4.7px;color:#4a4a4a;width:66.58px;text-align-last:justify;transform:scaleY(1.15);transform-origin:0 0;">家庭场景-萤火虫基础体验套装</div>
<div class="t" style="left:432.50px;top:243.25px;font-size:4.9px;line-height:4.9px;height:4.9px;color:#585858;transform:scaleY(1.2);transform-origin:0 0;">2019-03-21</div>
<div class="t" style="left:480.00px;top:243.45px;font-size:4.6px;line-height:4.6px;height:4.6px;color:#3696e4;width:10.02px;text-align-last:justify;transform:scaleY(1.12);transform-origin:0 0;text-decoration:underline;text-decoration-thickness:0.4px;text-underline-offset:0.2px;">下载</div>
<div class="t" style="left:310.30px;top:254.39px;font-size:4.7px;line-height:4.7px;height:4.7px;color:#4a4a4a;width:56.58px;text-align-last:justify;transform:scaleY(1.15);transform-origin:0 0;">商铺场景-收银台监控方案</div>
<div class="t" style="left:432.50px;top:254.19px;font-size:4.9px;line-height:4.9px;height:4.9px;color:#585858;transform:scaleY(1.2);transform-origin:0 0;">2019-03-21</div>
<div class="t" style="left:480.00px;top:254.39px;font-size:4.6px;line-height:4.6px;height:4.6px;color:#3696e4;width:10.02px;text-align-last:justify;transform:scaleY(1.12);transform-origin:0 0;text-decoration:underline;text-decoration-thickness:0.4px;text-underline-offset:0.2px;">下载</div>
<div class="t" style="left:310.30px;top:265.33px;font-size:4.7px;line-height:4.7px;height:4.7px;color:#4a4a4a;width:66.58px;text-align-last:justify;transform:scaleY(1.15);transform-origin:0 0;">商铺场景-美容美发店监控方案</div>
<div class="t" style="left:432.50px;top:265.13px;font-size:4.9px;line-height:4.9px;height:4.9px;color:#585858;transform:scaleY(1.2);transform-origin:0 0;">2019-03-21</div>
<div class="t" style="left:480.00px;top:265.33px;font-size:4.6px;line-height:4.6px;height:4.6px;color:#3696e4;width:10.02px;text-align-last:justify;transform:scaleY(1.12);transform-origin:0 0;text-decoration:underline;text-decoration-thickness:0.4px;text-underline-offset:0.2px;">下载</div>
<div class="t" style="left:310.30px;top:276.27px;font-size:4.7px;line-height:4.7px;height:4.7px;color:#4a4a4a;width:66.58px;text-align-last:justify;transform:scaleY(1.15);transform-origin:0 0;">商铺场景-便当西点店监控方案</div>
<div class="t" style="left:432.50px;top:276.07px;font-size:4.9px;line-height:4.9px;height:4.9px;color:#585858;transform:scaleY(1.2);transform-origin:0 0;">2019-03-21</div>
<div class="t" style="left:480.00px;top:276.27px;font-size:4.6px;line-height:4.6px;height:4.6px;color:#3696e4;width:10.02px;text-align-last:justify;transform:scaleY(1.12);transform-origin:0 0;text-decoration:underline;text-decoration-thickness:0.4px;text-underline-offset:0.2px;">下载</div>
<div class="t" style="left:310.30px;top:287.21px;font-size:4.7px;line-height:4.7px;height:4.7px;color:#4a4a4a;width:66.58px;text-align-last:justify;transform:scaleY(1.15);transform-origin:0 0;">商铺场景-服装饰品店监控方案</div>
<div class="t" style="left:432.50px;top:287.01px;font-size:4.9px;line-height:4.9px;height:4.9px;color:#585858;transform:scaleY(1.2);transform-origin:0 0;">2019-03-21</div>
<div class="t" style="left:480.00px;top:287.21px;font-size:4.6px;line-height:4.6px;height:4.6px;color:#3696e4;width:10.02px;text-align-last:justify;transform:scaleY(1.12);transform-origin:0 0;text-decoration:underline;text-decoration-thickness:0.4px;text-underline-offset:0.2px;">下载</div>
<div class="t" style="left:310.30px;top:298.15px;font-size:4.7px;line-height:4.7px;height:4.7px;color:#4a4a4a;width:67.89px;text-align-last:justify;transform:scaleY(1.15);transform-origin:0 0;">商铺场景-仓库.储藏室监控方案</div>
<div class="t" style="left:432.50px;top:297.95px;font-size:4.9px;line-height:4.9px;height:4.9px;color:#585858;transform:scaleY(1.2);transform-origin:0 0;">2019-03-21</div>
<div class="t" style="left:480.00px;top:298.15px;font-size:4.6px;line-height:4.6px;height:4.6px;color:#3696e4;width:10.02px;text-align-last:justify;transform:scaleY(1.12);transform-origin:0 0;text-decoration:underline;text-decoration-thickness:0.4px;text-underline-offset:0.2px;">下载</div>
<div class="t" style="left:310.30px;top:309.09px;font-size:4.7px;line-height:4.7px;height:4.7px;color:#4a4a4a;width:71.58px;text-align-last:justify;transform:scaleY(1.15);transform-origin:0 0;">商铺场景-中小超市监控全景方案</div>
<div class="t" style="left:432.50px;top:308.89px;font-size:4.9px;line-height:4.9px;height:4.9px;color:#585858;transform:scaleY(1.2);transform-origin:0 0;">2019-03-21</div>
<div class="t" style="left:480.00px;top:309.09px;font-size:4.6px;line-height:4.6px;height:4.6px;color:#3696e4;width:10.02px;text-align-last:justify;transform:scaleY(1.12);transform-origin:0 0;text-decoration:underline;text-decoration-thickness:0.4px;text-underline-offset:0.2px;">下载</div>
<div class="t" style="left:310.30px;top:320.03px;font-size:4.7px;line-height:4.7px;height:4.7px;color:#4a4a4a;width:71.58px;text-align-last:justify;transform:scaleY(1.15);transform-origin:0 0;">商铺场景-中小超市监控传统方案</div>
<div class="t" style="left:432.50px;top:319.83px;font-size:4.9px;line-height:4.9px;height:4.9px;color:#585858;transform:scaleY(1.2);transform-origin:0 0;">2019-03-21</div>
<div class="t" style="left:480.00px;top:320.03px;font-size:4.6px;line-height:4.6px;height:4.6px;color:#3696e4;width:10.02px;text-align-last:justify;transform:scaleY(1.12);transform-origin:0 0;text-decoration:underline;text-decoration-thickness:0.4px;text-underline-offset:0.2px;">下载</div>
<svg width="685" height="427" viewBox="0 0 685 427"><rect x="308.0" y="140.79" width="192.6" height="0.9" fill="#e2e2e2"/><rect x="308.0" y="151.73" width="192.6" height="0.9" fill="#e2e2e2"/><rect x="308.0" y="162.67" width="192.6" height="0.9" fill="#e2e2e2"/><rect x="308.0" y="173.61" width="192.6" height="0.9" fill="#e2e2e2"/><rect x="308.0" y="184.55" width="192.6" height="0.9" fill="#e2e2e2"/><rect x="308.0" y="195.49" width="192.6" height="0.9" fill="#e2e2e2"/><rect x="308.0" y="206.43" width="192.6" height="0.9" fill="#e2e2e2"/><rect x="308.0" y="217.37" width="192.6" height="0.9" fill="#e2e2e2"/><rect x="308.0" y="228.31" width="192.6" height="0.9" fill="#e2e2e2"/><rect x="308.0" y="239.25" width="192.6" height="0.9" fill="#e2e2e2"/><rect x="308.0" y="250.19" width="192.6" height="0.9" fill="#e2e2e2"/><rect x="308.0" y="261.13" width="192.6" height="0.9" fill="#e2e2e2"/><rect x="308.0" y="272.07" width="192.6" height="0.9" fill="#e2e2e2"/><rect x="308.0" y="283.01" width="192.6" height="0.9" fill="#e2e2e2"/><rect x="308.0" y="293.95" width="192.6" height="0.9" fill="#e2e2e2"/><rect x="308.0" y="304.89" width="192.6" height="0.9" fill="#e2e2e2"/><rect x="308.0" y="315.83" width="192.6" height="0.9" fill="#e2e2e2"/><rect x="308.0" y="326.77" width="192.6" height="0.9" fill="#e2e2e2"/><rect x="429.9" y="130.3" width="0.8" height="196.9" fill="#e6e6e6"/><rect x="477.2" y="130.3" width="0.8" height="196.9" fill="#e6e6e6"/><rect x="500.5" y="98" width="0.6" height="245" fill="#e4e4e4"/></svg>
<svg width="685" height="427" viewBox="0 0 685 427"><rect x="312.2" y="332.3" width="5.3" height="7.5" fill="#fff" stroke="#dcdcdc" stroke-width="0.6"/><rect x="320.2" y="332.3" width="5.3" height="7.5" fill="#fff" stroke="#dcdcdc" stroke-width="0.6"/></svg>
<div class="t" style="left:313.60px;top:333.70px;font-size:4.6px;line-height:4.6px;height:4.6px;color:#666;font-weight:bold;transform:scaleY(1.1);transform-origin:0 0;">1</div>
<div class="t" style="left:321.60px;top:333.70px;font-size:4.6px;line-height:4.6px;height:4.6px;color:#2a8be0;font-weight:bold;transform:scaleY(1.1);transform-origin:0 0;text-decoration:underline;text-decoration-thickness:0.4px;">2</div>
</body></html>
